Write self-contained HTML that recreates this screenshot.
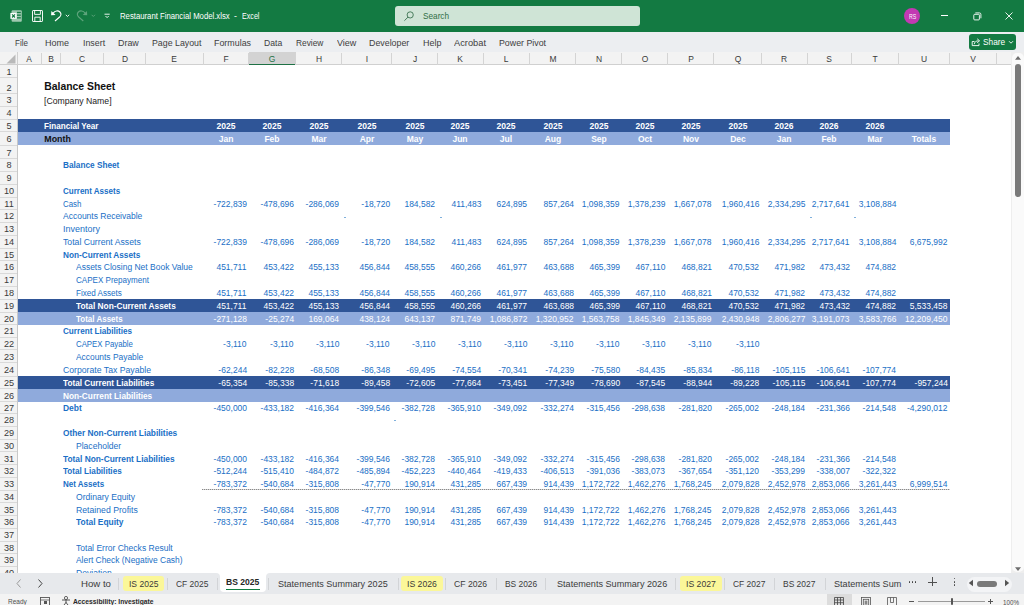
<!DOCTYPE html>
<html><head><meta charset="utf-8"><title>Restaurant Financial Model.xlsx - Excel</title>
<style>
html,body{margin:0;padding:0;}
body{width:1024px;height:605px;overflow:hidden;position:relative;background:#fff;font-family:"Liberation Sans", sans-serif;}
.t{position:absolute;white-space:nowrap;font-family:"Liberation Sans", sans-serif;}
</style></head><body>
<div style="position:absolute;left:17.00px;top:119.00px;width:932.75px;height:12.80px;background:#2f5597;"></div>
<div style="position:absolute;left:17.00px;top:131.80px;width:932.75px;height:13.50px;background:#8faadc;"></div>
<div style="position:absolute;left:17.00px;top:299.36px;width:932.75px;height:12.74px;background:#2f5597;"></div>
<div style="position:absolute;left:17.00px;top:312.10px;width:932.75px;height:12.74px;background:#8faadc;"></div>
<div style="position:absolute;left:17.00px;top:375.96px;width:932.75px;height:12.74px;background:#2f5597;"></div>
<div style="position:absolute;left:17.00px;top:388.70px;width:932.75px;height:13.14px;background:#8faadc;"></div>
<div style="position:absolute;left:202px;top:489px;width:748px;height:1px;background:repeating-linear-gradient(90deg,#8a8a8a 0 1px,#d4d4d4 1px 2px);"></div>
<div class="t" style="left:44.30px;top:81px;font-size:10.4px;line-height:11.62px;color:#111;font-weight:bold;">Balance Sheet</div>
<div class="t" style="left:44.30px;top:96px;font-size:9.0px;line-height:10.05px;color:#222;transform:scaleX(0.965);transform-origin:left 0;">[Company Name]</div>
<div class="t" style="left:44.30px;top:122px;font-size:8.8px;line-height:9.83px;color:#fff;font-weight:bold;transform:scaleX(0.922);transform-origin:left 0;">Financial Year</div>
<div class="t" style="left:44.30px;top:135px;font-size:8.9px;line-height:9.94px;color:#111;font-weight:bold;transform:scaleX(1.000);transform-origin:left 0;">Month</div>
<div class="t" style="left:26.00px;width:400px;text-align:center;top:122px;font-size:8.8px;line-height:9.83px;color:#fff;font-weight:bold;transform:scaleX(0.970);transform-origin:center 0;">2025</div>
<div class="t" style="left:26.00px;width:400px;text-align:center;top:135px;font-size:8.8px;line-height:9.83px;color:#fff;font-weight:bold;transform:scaleX(0.970);transform-origin:center 0;">Jan</div>
<div class="t" style="left:72.25px;width:400px;text-align:center;top:122px;font-size:8.8px;line-height:9.83px;color:#fff;font-weight:bold;transform:scaleX(0.970);transform-origin:center 0;">2025</div>
<div class="t" style="left:72.25px;width:400px;text-align:center;top:135px;font-size:8.8px;line-height:9.83px;color:#fff;font-weight:bold;transform:scaleX(0.970);transform-origin:center 0;">Feb</div>
<div class="t" style="left:118.50px;width:400px;text-align:center;top:122px;font-size:8.8px;line-height:9.83px;color:#fff;font-weight:bold;transform:scaleX(0.970);transform-origin:center 0;">2025</div>
<div class="t" style="left:118.50px;width:400px;text-align:center;top:135px;font-size:8.8px;line-height:9.83px;color:#fff;font-weight:bold;transform:scaleX(0.970);transform-origin:center 0;">Mar</div>
<div class="t" style="left:166.50px;width:400px;text-align:center;top:122px;font-size:8.8px;line-height:9.83px;color:#fff;font-weight:bold;transform:scaleX(0.970);transform-origin:center 0;">2025</div>
<div class="t" style="left:166.50px;width:400px;text-align:center;top:135px;font-size:8.8px;line-height:9.83px;color:#fff;font-weight:bold;transform:scaleX(0.970);transform-origin:center 0;">Apr</div>
<div class="t" style="left:214.62px;width:400px;text-align:center;top:122px;font-size:8.8px;line-height:9.83px;color:#fff;font-weight:bold;transform:scaleX(0.970);transform-origin:center 0;">2025</div>
<div class="t" style="left:214.62px;width:400px;text-align:center;top:135px;font-size:8.8px;line-height:9.83px;color:#fff;font-weight:bold;transform:scaleX(0.970);transform-origin:center 0;">May</div>
<div class="t" style="left:260.38px;width:400px;text-align:center;top:122px;font-size:8.8px;line-height:9.83px;color:#fff;font-weight:bold;transform:scaleX(0.970);transform-origin:center 0;">2025</div>
<div class="t" style="left:260.38px;width:400px;text-align:center;top:135px;font-size:8.8px;line-height:9.83px;color:#fff;font-weight:bold;transform:scaleX(0.970);transform-origin:center 0;">Jun</div>
<div class="t" style="left:306.38px;width:400px;text-align:center;top:122px;font-size:8.8px;line-height:9.83px;color:#fff;font-weight:bold;transform:scaleX(0.970);transform-origin:center 0;">2025</div>
<div class="t" style="left:306.38px;width:400px;text-align:center;top:135px;font-size:8.8px;line-height:9.83px;color:#fff;font-weight:bold;transform:scaleX(0.970);transform-origin:center 0;">Jul</div>
<div class="t" style="left:352.62px;width:400px;text-align:center;top:122px;font-size:8.8px;line-height:9.83px;color:#fff;font-weight:bold;transform:scaleX(0.970);transform-origin:center 0;">2025</div>
<div class="t" style="left:352.62px;width:400px;text-align:center;top:135px;font-size:8.8px;line-height:9.83px;color:#fff;font-weight:bold;transform:scaleX(0.970);transform-origin:center 0;">Aug</div>
<div class="t" style="left:398.75px;width:400px;text-align:center;top:122px;font-size:8.8px;line-height:9.83px;color:#fff;font-weight:bold;transform:scaleX(0.970);transform-origin:center 0;">2025</div>
<div class="t" style="left:398.75px;width:400px;text-align:center;top:135px;font-size:8.8px;line-height:9.83px;color:#fff;font-weight:bold;transform:scaleX(0.970);transform-origin:center 0;">Sep</div>
<div class="t" style="left:444.62px;width:400px;text-align:center;top:122px;font-size:8.8px;line-height:9.83px;color:#fff;font-weight:bold;transform:scaleX(0.970);transform-origin:center 0;">2025</div>
<div class="t" style="left:444.62px;width:400px;text-align:center;top:135px;font-size:8.8px;line-height:9.83px;color:#fff;font-weight:bold;transform:scaleX(0.970);transform-origin:center 0;">Oct</div>
<div class="t" style="left:490.62px;width:400px;text-align:center;top:122px;font-size:8.8px;line-height:9.83px;color:#fff;font-weight:bold;transform:scaleX(0.970);transform-origin:center 0;">2025</div>
<div class="t" style="left:490.62px;width:400px;text-align:center;top:135px;font-size:8.8px;line-height:9.83px;color:#fff;font-weight:bold;transform:scaleX(0.970);transform-origin:center 0;">Nov</div>
<div class="t" style="left:537.50px;width:400px;text-align:center;top:122px;font-size:8.8px;line-height:9.83px;color:#fff;font-weight:bold;transform:scaleX(0.970);transform-origin:center 0;">2025</div>
<div class="t" style="left:537.50px;width:400px;text-align:center;top:135px;font-size:8.8px;line-height:9.83px;color:#fff;font-weight:bold;transform:scaleX(0.970);transform-origin:center 0;">Dec</div>
<div class="t" style="left:584.12px;width:400px;text-align:center;top:122px;font-size:8.8px;line-height:9.83px;color:#fff;font-weight:bold;transform:scaleX(0.970);transform-origin:center 0;">2026</div>
<div class="t" style="left:584.12px;width:400px;text-align:center;top:135px;font-size:8.8px;line-height:9.83px;color:#fff;font-weight:bold;transform:scaleX(0.970);transform-origin:center 0;">Jan</div>
<div class="t" style="left:629.38px;width:400px;text-align:center;top:122px;font-size:8.8px;line-height:9.83px;color:#fff;font-weight:bold;transform:scaleX(0.970);transform-origin:center 0;">2026</div>
<div class="t" style="left:629.38px;width:400px;text-align:center;top:135px;font-size:8.8px;line-height:9.83px;color:#fff;font-weight:bold;transform:scaleX(0.970);transform-origin:center 0;">Feb</div>
<div class="t" style="left:675.12px;width:400px;text-align:center;top:122px;font-size:8.8px;line-height:9.83px;color:#fff;font-weight:bold;transform:scaleX(0.970);transform-origin:center 0;">2026</div>
<div class="t" style="left:675.12px;width:400px;text-align:center;top:135px;font-size:8.8px;line-height:9.83px;color:#fff;font-weight:bold;transform:scaleX(0.970);transform-origin:center 0;">Mar</div>
<div class="t" style="left:724.12px;width:400px;text-align:center;top:135px;font-size:8.8px;line-height:9.83px;color:#fff;font-weight:bold;transform:scaleX(0.970);transform-origin:center 0;">Totals</div>
<div class="t" style="left:62.70px;top:161px;font-size:8.8px;line-height:9.83px;color:#1a6fc6;font-weight:bold;transform:scaleX(0.937);transform-origin:left 0;">Balance Sheet</div>
<div class="t" style="left:62.70px;top:187px;font-size:8.8px;line-height:9.83px;color:#1a6fc6;font-weight:bold;transform:scaleX(0.910);transform-origin:left 0;">Current Assets</div>
<div class="t" style="left:62.70px;top:200px;font-size:8.9px;line-height:9.94px;color:#1a6fc6;transform:scaleX(0.886);transform-origin:left 0;">Cash</div>
<div class="t" style="left:62.70px;top:212px;font-size:8.9px;line-height:9.94px;color:#1a6fc6;transform:scaleX(0.957);transform-origin:left 0;">Accounts Receivable</div>
<div class="t" style="left:62.70px;top:225px;font-size:8.9px;line-height:9.94px;color:#1a6fc6;transform:scaleX(1.011);transform-origin:left 0;">Inventory</div>
<div class="t" style="left:62.70px;top:238px;font-size:8.9px;line-height:9.94px;color:#1a6fc6;transform:scaleX(0.979);transform-origin:left 0;">Total Current Assets</div>
<div class="t" style="left:62.70px;top:251px;font-size:8.8px;line-height:9.83px;color:#1a6fc6;font-weight:bold;transform:scaleX(0.934);transform-origin:left 0;">Non-Current Assets</div>
<div class="t" style="left:75.60px;top:263px;font-size:8.9px;line-height:9.94px;color:#1a6fc6;transform:scaleX(0.956);transform-origin:left 0;">Assets Closing Net Book Value</div>
<div class="t" style="left:75.60px;top:276px;font-size:8.9px;line-height:9.94px;color:#1a6fc6;transform:scaleX(0.907);transform-origin:left 0;">CAPEX Prepayment</div>
<div class="t" style="left:75.60px;top:289px;font-size:8.9px;line-height:9.94px;color:#1a6fc6;transform:scaleX(0.912);transform-origin:left 0;">Fixed Assets</div>
<div class="t" style="left:75.60px;top:302px;font-size:8.8px;line-height:9.83px;color:#fff;font-weight:bold;transform:scaleX(0.945);transform-origin:left 0;">Total Non-Current Assets</div>
<div class="t" style="left:75.60px;top:315px;font-size:8.8px;line-height:9.83px;color:#fff;font-weight:bold;transform:scaleX(0.909);transform-origin:left 0;">Total Assets</div>
<div class="t" style="left:62.70px;top:327px;font-size:8.8px;line-height:9.83px;color:#1a6fc6;font-weight:bold;transform:scaleX(0.924);transform-origin:left 0;">Current Liabilities</div>
<div class="t" style="left:75.60px;top:340px;font-size:8.9px;line-height:9.94px;color:#1a6fc6;transform:scaleX(0.881);transform-origin:left 0;">CAPEX Payable</div>
<div class="t" style="left:75.60px;top:353px;font-size:8.9px;line-height:9.94px;color:#1a6fc6;transform:scaleX(0.947);transform-origin:left 0;">Accounts Payable</div>
<div class="t" style="left:62.70px;top:366px;font-size:8.9px;line-height:9.94px;color:#1a6fc6;transform:scaleX(0.977);transform-origin:left 0;">Corporate Tax Payable</div>
<div class="t" style="left:62.70px;top:379px;font-size:8.8px;line-height:9.83px;color:#fff;font-weight:bold;transform:scaleX(0.935);transform-origin:left 0;">Total Current Liabilities</div>
<div class="t" style="left:62.70px;top:392px;font-size:8.8px;line-height:9.83px;color:#fff;font-weight:bold;transform:scaleX(0.941);transform-origin:left 0;">Non-Current Liabilities</div>
<div class="t" style="left:62.70px;top:404px;font-size:8.8px;line-height:9.83px;color:#1a6fc6;font-weight:bold;transform:scaleX(0.961);transform-origin:left 0;">Debt</div>
<div class="t" style="left:62.70px;top:429px;font-size:8.8px;line-height:9.83px;color:#1a6fc6;font-weight:bold;transform:scaleX(0.946);transform-origin:left 0;">Other Non-Current Liabilities</div>
<div class="t" style="left:75.60px;top:442px;font-size:8.9px;line-height:9.94px;color:#1a6fc6;transform:scaleX(0.964);transform-origin:left 0;">Placeholder</div>
<div class="t" style="left:62.70px;top:455px;font-size:8.8px;line-height:9.83px;color:#1a6fc6;font-weight:bold;transform:scaleX(0.949);transform-origin:left 0;">Total Non-Current Liabilities</div>
<div class="t" style="left:62.70px;top:467px;font-size:8.8px;line-height:9.83px;color:#1a6fc6;font-weight:bold;transform:scaleX(0.926);transform-origin:left 0;">Total Liabilities</div>
<div class="t" style="left:62.70px;top:480px;font-size:8.8px;line-height:9.83px;color:#1a6fc6;font-weight:bold;transform:scaleX(0.910);transform-origin:left 0;">Net Assets</div>
<div class="t" style="left:75.60px;top:493px;font-size:8.9px;line-height:9.94px;color:#1a6fc6;transform:scaleX(0.965);transform-origin:left 0;">Ordinary Equity</div>
<div class="t" style="left:75.60px;top:506px;font-size:8.9px;line-height:9.94px;color:#1a6fc6;transform:scaleX(0.978);transform-origin:left 0;">Retained Profits</div>
<div class="t" style="left:75.60px;top:518px;font-size:8.8px;line-height:9.83px;color:#1a6fc6;font-weight:bold;transform:scaleX(0.956);transform-origin:left 0;">Total Equity</div>
<div class="t" style="left:75.60px;top:544px;font-size:8.9px;line-height:9.94px;color:#1a6fc6;transform:scaleX(0.961);transform-origin:left 0;">Total Error Checks Result</div>
<div class="t" style="left:75.60px;top:556px;font-size:8.9px;line-height:9.94px;color:#1a6fc6;transform:scaleX(0.947);transform-origin:left 0;">Alert Check (Negative Cash)</div>
<div class="t" style="left:75.60px;top:569px;font-size:8.9px;line-height:9.94px;color:#1a6fc6;transform:scaleX(0.965);transform-origin:left 0;">Deviation</div>
<div class="t" style="right:777.25px;top:200px;font-size:8.9px;line-height:9.94px;color:#1a6fc6;transform:scaleX(0.955);transform-origin:right 0;">-722,839</div>
<div class="t" style="right:730.25px;top:200px;font-size:8.9px;line-height:9.94px;color:#1a6fc6;transform:scaleX(0.955);transform-origin:right 0;">-478,696</div>
<div class="t" style="right:684.75px;top:200px;font-size:8.9px;line-height:9.94px;color:#1a6fc6;transform:scaleX(0.955);transform-origin:right 0;">-286,069</div>
<div class="t" style="right:634.25px;top:200px;font-size:8.9px;line-height:9.94px;color:#1a6fc6;transform:scaleX(0.955);transform-origin:right 0;">-18,720</div>
<div class="t" style="right:588.50px;top:200px;font-size:8.9px;line-height:9.94px;color:#1a6fc6;transform:scaleX(0.955);transform-origin:right 0;">184,582</div>
<div class="t" style="right:542.75px;top:200px;font-size:8.9px;line-height:9.94px;color:#1a6fc6;transform:scaleX(0.955);transform-origin:right 0;">411,483</div>
<div class="t" style="right:496.50px;top:200px;font-size:8.9px;line-height:9.94px;color:#1a6fc6;transform:scaleX(0.955);transform-origin:right 0;">624,895</div>
<div class="t" style="right:450.25px;top:200px;font-size:8.9px;line-height:9.94px;color:#1a6fc6;transform:scaleX(0.955);transform-origin:right 0;">857,264</div>
<div class="t" style="right:404.25px;top:200px;font-size:8.9px;line-height:9.94px;color:#1a6fc6;transform:scaleX(0.955);transform-origin:right 0;">1,098,359</div>
<div class="t" style="right:358.50px;top:200px;font-size:8.9px;line-height:9.94px;color:#1a6fc6;transform:scaleX(0.955);transform-origin:right 0;">1,378,239</div>
<div class="t" style="right:312.25px;top:200px;font-size:8.9px;line-height:9.94px;color:#1a6fc6;transform:scaleX(0.955);transform-origin:right 0;">1,667,078</div>
<div class="t" style="right:264.75px;top:200px;font-size:8.9px;line-height:9.94px;color:#1a6fc6;transform:scaleX(0.955);transform-origin:right 0;">1,960,416</div>
<div class="t" style="right:219.00px;top:200px;font-size:8.9px;line-height:9.94px;color:#1a6fc6;transform:scaleX(0.955);transform-origin:right 0;">2,334,295</div>
<div class="t" style="right:174.25px;top:200px;font-size:8.9px;line-height:9.94px;color:#1a6fc6;transform:scaleX(0.955);transform-origin:right 0;">2,717,641</div>
<div class="t" style="right:127.50px;top:200px;font-size:8.9px;line-height:9.94px;color:#1a6fc6;transform:scaleX(0.955);transform-origin:right 0;">3,108,884</div>
<div class="t" style="right:777.25px;top:238px;font-size:8.9px;line-height:9.94px;color:#1a6fc6;transform:scaleX(0.955);transform-origin:right 0;">-722,839</div>
<div class="t" style="right:730.25px;top:238px;font-size:8.9px;line-height:9.94px;color:#1a6fc6;transform:scaleX(0.955);transform-origin:right 0;">-478,696</div>
<div class="t" style="right:684.75px;top:238px;font-size:8.9px;line-height:9.94px;color:#1a6fc6;transform:scaleX(0.955);transform-origin:right 0;">-286,069</div>
<div class="t" style="right:634.25px;top:238px;font-size:8.9px;line-height:9.94px;color:#1a6fc6;transform:scaleX(0.955);transform-origin:right 0;">-18,720</div>
<div class="t" style="right:588.50px;top:238px;font-size:8.9px;line-height:9.94px;color:#1a6fc6;transform:scaleX(0.955);transform-origin:right 0;">184,582</div>
<div class="t" style="right:542.75px;top:238px;font-size:8.9px;line-height:9.94px;color:#1a6fc6;transform:scaleX(0.955);transform-origin:right 0;">411,483</div>
<div class="t" style="right:496.50px;top:238px;font-size:8.9px;line-height:9.94px;color:#1a6fc6;transform:scaleX(0.955);transform-origin:right 0;">624,895</div>
<div class="t" style="right:450.25px;top:238px;font-size:8.9px;line-height:9.94px;color:#1a6fc6;transform:scaleX(0.955);transform-origin:right 0;">857,264</div>
<div class="t" style="right:404.25px;top:238px;font-size:8.9px;line-height:9.94px;color:#1a6fc6;transform:scaleX(0.955);transform-origin:right 0;">1,098,359</div>
<div class="t" style="right:358.50px;top:238px;font-size:8.9px;line-height:9.94px;color:#1a6fc6;transform:scaleX(0.955);transform-origin:right 0;">1,378,239</div>
<div class="t" style="right:312.25px;top:238px;font-size:8.9px;line-height:9.94px;color:#1a6fc6;transform:scaleX(0.955);transform-origin:right 0;">1,667,078</div>
<div class="t" style="right:264.75px;top:238px;font-size:8.9px;line-height:9.94px;color:#1a6fc6;transform:scaleX(0.955);transform-origin:right 0;">1,960,416</div>
<div class="t" style="right:219.00px;top:238px;font-size:8.9px;line-height:9.94px;color:#1a6fc6;transform:scaleX(0.955);transform-origin:right 0;">2,334,295</div>
<div class="t" style="right:174.25px;top:238px;font-size:8.9px;line-height:9.94px;color:#1a6fc6;transform:scaleX(0.955);transform-origin:right 0;">2,717,641</div>
<div class="t" style="right:127.50px;top:238px;font-size:8.9px;line-height:9.94px;color:#1a6fc6;transform:scaleX(0.955);transform-origin:right 0;">3,108,884</div>
<div class="t" style="right:76.25px;top:238px;font-size:8.9px;line-height:9.94px;color:#1a6fc6;transform:scaleX(0.955);transform-origin:right 0;">6,675,992</div>
<div class="t" style="right:777.25px;top:263px;font-size:8.9px;line-height:9.94px;color:#1a6fc6;transform:scaleX(0.955);transform-origin:right 0;">451,711</div>
<div class="t" style="right:730.25px;top:263px;font-size:8.9px;line-height:9.94px;color:#1a6fc6;transform:scaleX(0.955);transform-origin:right 0;">453,422</div>
<div class="t" style="right:684.75px;top:263px;font-size:8.9px;line-height:9.94px;color:#1a6fc6;transform:scaleX(0.955);transform-origin:right 0;">455,133</div>
<div class="t" style="right:634.25px;top:263px;font-size:8.9px;line-height:9.94px;color:#1a6fc6;transform:scaleX(0.955);transform-origin:right 0;">456,844</div>
<div class="t" style="right:588.50px;top:263px;font-size:8.9px;line-height:9.94px;color:#1a6fc6;transform:scaleX(0.955);transform-origin:right 0;">458,555</div>
<div class="t" style="right:542.75px;top:263px;font-size:8.9px;line-height:9.94px;color:#1a6fc6;transform:scaleX(0.955);transform-origin:right 0;">460,266</div>
<div class="t" style="right:496.50px;top:263px;font-size:8.9px;line-height:9.94px;color:#1a6fc6;transform:scaleX(0.955);transform-origin:right 0;">461,977</div>
<div class="t" style="right:450.25px;top:263px;font-size:8.9px;line-height:9.94px;color:#1a6fc6;transform:scaleX(0.955);transform-origin:right 0;">463,688</div>
<div class="t" style="right:404.25px;top:263px;font-size:8.9px;line-height:9.94px;color:#1a6fc6;transform:scaleX(0.955);transform-origin:right 0;">465,399</div>
<div class="t" style="right:358.50px;top:263px;font-size:8.9px;line-height:9.94px;color:#1a6fc6;transform:scaleX(0.955);transform-origin:right 0;">467,110</div>
<div class="t" style="right:312.25px;top:263px;font-size:8.9px;line-height:9.94px;color:#1a6fc6;transform:scaleX(0.955);transform-origin:right 0;">468,821</div>
<div class="t" style="right:264.75px;top:263px;font-size:8.9px;line-height:9.94px;color:#1a6fc6;transform:scaleX(0.955);transform-origin:right 0;">470,532</div>
<div class="t" style="right:219.00px;top:263px;font-size:8.9px;line-height:9.94px;color:#1a6fc6;transform:scaleX(0.955);transform-origin:right 0;">471,982</div>
<div class="t" style="right:174.25px;top:263px;font-size:8.9px;line-height:9.94px;color:#1a6fc6;transform:scaleX(0.955);transform-origin:right 0;">473,432</div>
<div class="t" style="right:127.50px;top:263px;font-size:8.9px;line-height:9.94px;color:#1a6fc6;transform:scaleX(0.955);transform-origin:right 0;">474,882</div>
<div class="t" style="right:777.25px;top:289px;font-size:8.9px;line-height:9.94px;color:#1a6fc6;transform:scaleX(0.955);transform-origin:right 0;">451,711</div>
<div class="t" style="right:730.25px;top:289px;font-size:8.9px;line-height:9.94px;color:#1a6fc6;transform:scaleX(0.955);transform-origin:right 0;">453,422</div>
<div class="t" style="right:684.75px;top:289px;font-size:8.9px;line-height:9.94px;color:#1a6fc6;transform:scaleX(0.955);transform-origin:right 0;">455,133</div>
<div class="t" style="right:634.25px;top:289px;font-size:8.9px;line-height:9.94px;color:#1a6fc6;transform:scaleX(0.955);transform-origin:right 0;">456,844</div>
<div class="t" style="right:588.50px;top:289px;font-size:8.9px;line-height:9.94px;color:#1a6fc6;transform:scaleX(0.955);transform-origin:right 0;">458,555</div>
<div class="t" style="right:542.75px;top:289px;font-size:8.9px;line-height:9.94px;color:#1a6fc6;transform:scaleX(0.955);transform-origin:right 0;">460,266</div>
<div class="t" style="right:496.50px;top:289px;font-size:8.9px;line-height:9.94px;color:#1a6fc6;transform:scaleX(0.955);transform-origin:right 0;">461,977</div>
<div class="t" style="right:450.25px;top:289px;font-size:8.9px;line-height:9.94px;color:#1a6fc6;transform:scaleX(0.955);transform-origin:right 0;">463,688</div>
<div class="t" style="right:404.25px;top:289px;font-size:8.9px;line-height:9.94px;color:#1a6fc6;transform:scaleX(0.955);transform-origin:right 0;">465,399</div>
<div class="t" style="right:358.50px;top:289px;font-size:8.9px;line-height:9.94px;color:#1a6fc6;transform:scaleX(0.955);transform-origin:right 0;">467,110</div>
<div class="t" style="right:312.25px;top:289px;font-size:8.9px;line-height:9.94px;color:#1a6fc6;transform:scaleX(0.955);transform-origin:right 0;">468,821</div>
<div class="t" style="right:264.75px;top:289px;font-size:8.9px;line-height:9.94px;color:#1a6fc6;transform:scaleX(0.955);transform-origin:right 0;">470,532</div>
<div class="t" style="right:219.00px;top:289px;font-size:8.9px;line-height:9.94px;color:#1a6fc6;transform:scaleX(0.955);transform-origin:right 0;">471,982</div>
<div class="t" style="right:174.25px;top:289px;font-size:8.9px;line-height:9.94px;color:#1a6fc6;transform:scaleX(0.955);transform-origin:right 0;">473,432</div>
<div class="t" style="right:127.50px;top:289px;font-size:8.9px;line-height:9.94px;color:#1a6fc6;transform:scaleX(0.955);transform-origin:right 0;">474,882</div>
<div class="t" style="right:777.25px;top:302px;font-size:8.9px;line-height:9.94px;color:#fff;transform:scaleX(0.955);transform-origin:right 0;">451,711</div>
<div class="t" style="right:730.25px;top:302px;font-size:8.9px;line-height:9.94px;color:#fff;transform:scaleX(0.955);transform-origin:right 0;">453,422</div>
<div class="t" style="right:684.75px;top:302px;font-size:8.9px;line-height:9.94px;color:#fff;transform:scaleX(0.955);transform-origin:right 0;">455,133</div>
<div class="t" style="right:634.25px;top:302px;font-size:8.9px;line-height:9.94px;color:#fff;transform:scaleX(0.955);transform-origin:right 0;">456,844</div>
<div class="t" style="right:588.50px;top:302px;font-size:8.9px;line-height:9.94px;color:#fff;transform:scaleX(0.955);transform-origin:right 0;">458,555</div>
<div class="t" style="right:542.75px;top:302px;font-size:8.9px;line-height:9.94px;color:#fff;transform:scaleX(0.955);transform-origin:right 0;">460,266</div>
<div class="t" style="right:496.50px;top:302px;font-size:8.9px;line-height:9.94px;color:#fff;transform:scaleX(0.955);transform-origin:right 0;">461,977</div>
<div class="t" style="right:450.25px;top:302px;font-size:8.9px;line-height:9.94px;color:#fff;transform:scaleX(0.955);transform-origin:right 0;">463,688</div>
<div class="t" style="right:404.25px;top:302px;font-size:8.9px;line-height:9.94px;color:#fff;transform:scaleX(0.955);transform-origin:right 0;">465,399</div>
<div class="t" style="right:358.50px;top:302px;font-size:8.9px;line-height:9.94px;color:#fff;transform:scaleX(0.955);transform-origin:right 0;">467,110</div>
<div class="t" style="right:312.25px;top:302px;font-size:8.9px;line-height:9.94px;color:#fff;transform:scaleX(0.955);transform-origin:right 0;">468,821</div>
<div class="t" style="right:264.75px;top:302px;font-size:8.9px;line-height:9.94px;color:#fff;transform:scaleX(0.955);transform-origin:right 0;">470,532</div>
<div class="t" style="right:219.00px;top:302px;font-size:8.9px;line-height:9.94px;color:#fff;transform:scaleX(0.955);transform-origin:right 0;">471,982</div>
<div class="t" style="right:174.25px;top:302px;font-size:8.9px;line-height:9.94px;color:#fff;transform:scaleX(0.955);transform-origin:right 0;">473,432</div>
<div class="t" style="right:127.50px;top:302px;font-size:8.9px;line-height:9.94px;color:#fff;transform:scaleX(0.955);transform-origin:right 0;">474,882</div>
<div class="t" style="right:76.25px;top:302px;font-size:8.9px;line-height:9.94px;color:#fff;transform:scaleX(0.955);transform-origin:right 0;">5,533,458</div>
<div class="t" style="right:777.25px;top:315px;font-size:8.9px;line-height:9.94px;color:#fff;transform:scaleX(0.955);transform-origin:right 0;">-271,128</div>
<div class="t" style="right:730.25px;top:315px;font-size:8.9px;line-height:9.94px;color:#fff;transform:scaleX(0.955);transform-origin:right 0;">-25,274</div>
<div class="t" style="right:684.75px;top:315px;font-size:8.9px;line-height:9.94px;color:#fff;transform:scaleX(0.955);transform-origin:right 0;">169,064</div>
<div class="t" style="right:634.25px;top:315px;font-size:8.9px;line-height:9.94px;color:#fff;transform:scaleX(0.955);transform-origin:right 0;">438,124</div>
<div class="t" style="right:588.50px;top:315px;font-size:8.9px;line-height:9.94px;color:#fff;transform:scaleX(0.955);transform-origin:right 0;">643,137</div>
<div class="t" style="right:542.75px;top:315px;font-size:8.9px;line-height:9.94px;color:#fff;transform:scaleX(0.955);transform-origin:right 0;">871,749</div>
<div class="t" style="right:496.50px;top:315px;font-size:8.9px;line-height:9.94px;color:#fff;transform:scaleX(0.955);transform-origin:right 0;">1,086,872</div>
<div class="t" style="right:450.25px;top:315px;font-size:8.9px;line-height:9.94px;color:#fff;transform:scaleX(0.955);transform-origin:right 0;">1,320,952</div>
<div class="t" style="right:404.25px;top:315px;font-size:8.9px;line-height:9.94px;color:#fff;transform:scaleX(0.955);transform-origin:right 0;">1,563,758</div>
<div class="t" style="right:358.50px;top:315px;font-size:8.9px;line-height:9.94px;color:#fff;transform:scaleX(0.955);transform-origin:right 0;">1,845,349</div>
<div class="t" style="right:312.25px;top:315px;font-size:8.9px;line-height:9.94px;color:#fff;transform:scaleX(0.955);transform-origin:right 0;">2,135,899</div>
<div class="t" style="right:264.75px;top:315px;font-size:8.9px;line-height:9.94px;color:#fff;transform:scaleX(0.955);transform-origin:right 0;">2,430,948</div>
<div class="t" style="right:219.00px;top:315px;font-size:8.9px;line-height:9.94px;color:#fff;transform:scaleX(0.955);transform-origin:right 0;">2,806,277</div>
<div class="t" style="right:174.25px;top:315px;font-size:8.9px;line-height:9.94px;color:#fff;transform:scaleX(0.955);transform-origin:right 0;">3,191,073</div>
<div class="t" style="right:127.50px;top:315px;font-size:8.9px;line-height:9.94px;color:#fff;transform:scaleX(0.955);transform-origin:right 0;">3,583,766</div>
<div class="t" style="right:76.25px;top:315px;font-size:8.9px;line-height:9.94px;color:#fff;transform:scaleX(0.955);transform-origin:right 0;">12,209,450</div>
<div class="t" style="right:777.25px;top:340px;font-size:8.9px;line-height:9.94px;color:#1a6fc6;transform:scaleX(0.955);transform-origin:right 0;">-3,110</div>
<div class="t" style="right:730.25px;top:340px;font-size:8.9px;line-height:9.94px;color:#1a6fc6;transform:scaleX(0.955);transform-origin:right 0;">-3,110</div>
<div class="t" style="right:684.75px;top:340px;font-size:8.9px;line-height:9.94px;color:#1a6fc6;transform:scaleX(0.955);transform-origin:right 0;">-3,110</div>
<div class="t" style="right:634.25px;top:340px;font-size:8.9px;line-height:9.94px;color:#1a6fc6;transform:scaleX(0.955);transform-origin:right 0;">-3,110</div>
<div class="t" style="right:588.50px;top:340px;font-size:8.9px;line-height:9.94px;color:#1a6fc6;transform:scaleX(0.955);transform-origin:right 0;">-3,110</div>
<div class="t" style="right:542.75px;top:340px;font-size:8.9px;line-height:9.94px;color:#1a6fc6;transform:scaleX(0.955);transform-origin:right 0;">-3,110</div>
<div class="t" style="right:496.50px;top:340px;font-size:8.9px;line-height:9.94px;color:#1a6fc6;transform:scaleX(0.955);transform-origin:right 0;">-3,110</div>
<div class="t" style="right:450.25px;top:340px;font-size:8.9px;line-height:9.94px;color:#1a6fc6;transform:scaleX(0.955);transform-origin:right 0;">-3,110</div>
<div class="t" style="right:404.25px;top:340px;font-size:8.9px;line-height:9.94px;color:#1a6fc6;transform:scaleX(0.955);transform-origin:right 0;">-3,110</div>
<div class="t" style="right:358.50px;top:340px;font-size:8.9px;line-height:9.94px;color:#1a6fc6;transform:scaleX(0.955);transform-origin:right 0;">-3,110</div>
<div class="t" style="right:312.25px;top:340px;font-size:8.9px;line-height:9.94px;color:#1a6fc6;transform:scaleX(0.955);transform-origin:right 0;">-3,110</div>
<div class="t" style="right:264.75px;top:340px;font-size:8.9px;line-height:9.94px;color:#1a6fc6;transform:scaleX(0.955);transform-origin:right 0;">-3,110</div>
<div class="t" style="right:777.25px;top:366px;font-size:8.9px;line-height:9.94px;color:#1a6fc6;transform:scaleX(0.955);transform-origin:right 0;">-62,244</div>
<div class="t" style="right:730.25px;top:366px;font-size:8.9px;line-height:9.94px;color:#1a6fc6;transform:scaleX(0.955);transform-origin:right 0;">-82,228</div>
<div class="t" style="right:684.75px;top:366px;font-size:8.9px;line-height:9.94px;color:#1a6fc6;transform:scaleX(0.955);transform-origin:right 0;">-68,508</div>
<div class="t" style="right:634.25px;top:366px;font-size:8.9px;line-height:9.94px;color:#1a6fc6;transform:scaleX(0.955);transform-origin:right 0;">-86,348</div>
<div class="t" style="right:588.50px;top:366px;font-size:8.9px;line-height:9.94px;color:#1a6fc6;transform:scaleX(0.955);transform-origin:right 0;">-69,495</div>
<div class="t" style="right:542.75px;top:366px;font-size:8.9px;line-height:9.94px;color:#1a6fc6;transform:scaleX(0.955);transform-origin:right 0;">-74,554</div>
<div class="t" style="right:496.50px;top:366px;font-size:8.9px;line-height:9.94px;color:#1a6fc6;transform:scaleX(0.955);transform-origin:right 0;">-70,341</div>
<div class="t" style="right:450.25px;top:366px;font-size:8.9px;line-height:9.94px;color:#1a6fc6;transform:scaleX(0.955);transform-origin:right 0;">-74,239</div>
<div class="t" style="right:404.25px;top:366px;font-size:8.9px;line-height:9.94px;color:#1a6fc6;transform:scaleX(0.955);transform-origin:right 0;">-75,580</div>
<div class="t" style="right:358.50px;top:366px;font-size:8.9px;line-height:9.94px;color:#1a6fc6;transform:scaleX(0.955);transform-origin:right 0;">-84,435</div>
<div class="t" style="right:312.25px;top:366px;font-size:8.9px;line-height:9.94px;color:#1a6fc6;transform:scaleX(0.955);transform-origin:right 0;">-85,834</div>
<div class="t" style="right:264.75px;top:366px;font-size:8.9px;line-height:9.94px;color:#1a6fc6;transform:scaleX(0.955);transform-origin:right 0;">-86,118</div>
<div class="t" style="right:219.00px;top:366px;font-size:8.9px;line-height:9.94px;color:#1a6fc6;transform:scaleX(0.955);transform-origin:right 0;">-105,115</div>
<div class="t" style="right:174.25px;top:366px;font-size:8.9px;line-height:9.94px;color:#1a6fc6;transform:scaleX(0.955);transform-origin:right 0;">-106,641</div>
<div class="t" style="right:127.50px;top:366px;font-size:8.9px;line-height:9.94px;color:#1a6fc6;transform:scaleX(0.955);transform-origin:right 0;">-107,774</div>
<div class="t" style="right:777.25px;top:379px;font-size:8.9px;line-height:9.94px;color:#fff;transform:scaleX(0.955);transform-origin:right 0;">-65,354</div>
<div class="t" style="right:730.25px;top:379px;font-size:8.9px;line-height:9.94px;color:#fff;transform:scaleX(0.955);transform-origin:right 0;">-85,338</div>
<div class="t" style="right:684.75px;top:379px;font-size:8.9px;line-height:9.94px;color:#fff;transform:scaleX(0.955);transform-origin:right 0;">-71,618</div>
<div class="t" style="right:634.25px;top:379px;font-size:8.9px;line-height:9.94px;color:#fff;transform:scaleX(0.955);transform-origin:right 0;">-89,458</div>
<div class="t" style="right:588.50px;top:379px;font-size:8.9px;line-height:9.94px;color:#fff;transform:scaleX(0.955);transform-origin:right 0;">-72,605</div>
<div class="t" style="right:542.75px;top:379px;font-size:8.9px;line-height:9.94px;color:#fff;transform:scaleX(0.955);transform-origin:right 0;">-77,664</div>
<div class="t" style="right:496.50px;top:379px;font-size:8.9px;line-height:9.94px;color:#fff;transform:scaleX(0.955);transform-origin:right 0;">-73,451</div>
<div class="t" style="right:450.25px;top:379px;font-size:8.9px;line-height:9.94px;color:#fff;transform:scaleX(0.955);transform-origin:right 0;">-77,349</div>
<div class="t" style="right:404.25px;top:379px;font-size:8.9px;line-height:9.94px;color:#fff;transform:scaleX(0.955);transform-origin:right 0;">-78,690</div>
<div class="t" style="right:358.50px;top:379px;font-size:8.9px;line-height:9.94px;color:#fff;transform:scaleX(0.955);transform-origin:right 0;">-87,545</div>
<div class="t" style="right:312.25px;top:379px;font-size:8.9px;line-height:9.94px;color:#fff;transform:scaleX(0.955);transform-origin:right 0;">-88,944</div>
<div class="t" style="right:264.75px;top:379px;font-size:8.9px;line-height:9.94px;color:#fff;transform:scaleX(0.955);transform-origin:right 0;">-89,228</div>
<div class="t" style="right:219.00px;top:379px;font-size:8.9px;line-height:9.94px;color:#fff;transform:scaleX(0.955);transform-origin:right 0;">-105,115</div>
<div class="t" style="right:174.25px;top:379px;font-size:8.9px;line-height:9.94px;color:#fff;transform:scaleX(0.955);transform-origin:right 0;">-106,641</div>
<div class="t" style="right:127.50px;top:379px;font-size:8.9px;line-height:9.94px;color:#fff;transform:scaleX(0.955);transform-origin:right 0;">-107,774</div>
<div class="t" style="right:76.25px;top:379px;font-size:8.9px;line-height:9.94px;color:#fff;transform:scaleX(0.955);transform-origin:right 0;">-957,244</div>
<div class="t" style="right:777.25px;top:404px;font-size:8.9px;line-height:9.94px;color:#1a6fc6;transform:scaleX(0.955);transform-origin:right 0;">-450,000</div>
<div class="t" style="right:730.25px;top:404px;font-size:8.9px;line-height:9.94px;color:#1a6fc6;transform:scaleX(0.955);transform-origin:right 0;">-433,182</div>
<div class="t" style="right:684.75px;top:404px;font-size:8.9px;line-height:9.94px;color:#1a6fc6;transform:scaleX(0.955);transform-origin:right 0;">-416,364</div>
<div class="t" style="right:634.25px;top:404px;font-size:8.9px;line-height:9.94px;color:#1a6fc6;transform:scaleX(0.955);transform-origin:right 0;">-399,546</div>
<div class="t" style="right:588.50px;top:404px;font-size:8.9px;line-height:9.94px;color:#1a6fc6;transform:scaleX(0.955);transform-origin:right 0;">-382,728</div>
<div class="t" style="right:542.75px;top:404px;font-size:8.9px;line-height:9.94px;color:#1a6fc6;transform:scaleX(0.955);transform-origin:right 0;">-365,910</div>
<div class="t" style="right:496.50px;top:404px;font-size:8.9px;line-height:9.94px;color:#1a6fc6;transform:scaleX(0.955);transform-origin:right 0;">-349,092</div>
<div class="t" style="right:450.25px;top:404px;font-size:8.9px;line-height:9.94px;color:#1a6fc6;transform:scaleX(0.955);transform-origin:right 0;">-332,274</div>
<div class="t" style="right:404.25px;top:404px;font-size:8.9px;line-height:9.94px;color:#1a6fc6;transform:scaleX(0.955);transform-origin:right 0;">-315,456</div>
<div class="t" style="right:358.50px;top:404px;font-size:8.9px;line-height:9.94px;color:#1a6fc6;transform:scaleX(0.955);transform-origin:right 0;">-298,638</div>
<div class="t" style="right:312.25px;top:404px;font-size:8.9px;line-height:9.94px;color:#1a6fc6;transform:scaleX(0.955);transform-origin:right 0;">-281,820</div>
<div class="t" style="right:264.75px;top:404px;font-size:8.9px;line-height:9.94px;color:#1a6fc6;transform:scaleX(0.955);transform-origin:right 0;">-265,002</div>
<div class="t" style="right:219.00px;top:404px;font-size:8.9px;line-height:9.94px;color:#1a6fc6;transform:scaleX(0.955);transform-origin:right 0;">-248,184</div>
<div class="t" style="right:174.25px;top:404px;font-size:8.9px;line-height:9.94px;color:#1a6fc6;transform:scaleX(0.955);transform-origin:right 0;">-231,366</div>
<div class="t" style="right:127.50px;top:404px;font-size:8.9px;line-height:9.94px;color:#1a6fc6;transform:scaleX(0.955);transform-origin:right 0;">-214,548</div>
<div class="t" style="right:76.25px;top:404px;font-size:8.9px;line-height:9.94px;color:#1a6fc6;transform:scaleX(0.955);transform-origin:right 0;">-4,290,012</div>
<div class="t" style="right:777.25px;top:455px;font-size:8.9px;line-height:9.94px;color:#1a6fc6;transform:scaleX(0.955);transform-origin:right 0;">-450,000</div>
<div class="t" style="right:730.25px;top:455px;font-size:8.9px;line-height:9.94px;color:#1a6fc6;transform:scaleX(0.955);transform-origin:right 0;">-433,182</div>
<div class="t" style="right:684.75px;top:455px;font-size:8.9px;line-height:9.94px;color:#1a6fc6;transform:scaleX(0.955);transform-origin:right 0;">-416,364</div>
<div class="t" style="right:634.25px;top:455px;font-size:8.9px;line-height:9.94px;color:#1a6fc6;transform:scaleX(0.955);transform-origin:right 0;">-399,546</div>
<div class="t" style="right:588.50px;top:455px;font-size:8.9px;line-height:9.94px;color:#1a6fc6;transform:scaleX(0.955);transform-origin:right 0;">-382,728</div>
<div class="t" style="right:542.75px;top:455px;font-size:8.9px;line-height:9.94px;color:#1a6fc6;transform:scaleX(0.955);transform-origin:right 0;">-365,910</div>
<div class="t" style="right:496.50px;top:455px;font-size:8.9px;line-height:9.94px;color:#1a6fc6;transform:scaleX(0.955);transform-origin:right 0;">-349,092</div>
<div class="t" style="right:450.25px;top:455px;font-size:8.9px;line-height:9.94px;color:#1a6fc6;transform:scaleX(0.955);transform-origin:right 0;">-332,274</div>
<div class="t" style="right:404.25px;top:455px;font-size:8.9px;line-height:9.94px;color:#1a6fc6;transform:scaleX(0.955);transform-origin:right 0;">-315,456</div>
<div class="t" style="right:358.50px;top:455px;font-size:8.9px;line-height:9.94px;color:#1a6fc6;transform:scaleX(0.955);transform-origin:right 0;">-298,638</div>
<div class="t" style="right:312.25px;top:455px;font-size:8.9px;line-height:9.94px;color:#1a6fc6;transform:scaleX(0.955);transform-origin:right 0;">-281,820</div>
<div class="t" style="right:264.75px;top:455px;font-size:8.9px;line-height:9.94px;color:#1a6fc6;transform:scaleX(0.955);transform-origin:right 0;">-265,002</div>
<div class="t" style="right:219.00px;top:455px;font-size:8.9px;line-height:9.94px;color:#1a6fc6;transform:scaleX(0.955);transform-origin:right 0;">-248,184</div>
<div class="t" style="right:174.25px;top:455px;font-size:8.9px;line-height:9.94px;color:#1a6fc6;transform:scaleX(0.955);transform-origin:right 0;">-231,366</div>
<div class="t" style="right:127.50px;top:455px;font-size:8.9px;line-height:9.94px;color:#1a6fc6;transform:scaleX(0.955);transform-origin:right 0;">-214,548</div>
<div class="t" style="right:777.25px;top:467px;font-size:8.9px;line-height:9.94px;color:#1a6fc6;transform:scaleX(0.955);transform-origin:right 0;">-512,244</div>
<div class="t" style="right:730.25px;top:467px;font-size:8.9px;line-height:9.94px;color:#1a6fc6;transform:scaleX(0.955);transform-origin:right 0;">-515,410</div>
<div class="t" style="right:684.75px;top:467px;font-size:8.9px;line-height:9.94px;color:#1a6fc6;transform:scaleX(0.955);transform-origin:right 0;">-484,872</div>
<div class="t" style="right:634.25px;top:467px;font-size:8.9px;line-height:9.94px;color:#1a6fc6;transform:scaleX(0.955);transform-origin:right 0;">-485,894</div>
<div class="t" style="right:588.50px;top:467px;font-size:8.9px;line-height:9.94px;color:#1a6fc6;transform:scaleX(0.955);transform-origin:right 0;">-452,223</div>
<div class="t" style="right:542.75px;top:467px;font-size:8.9px;line-height:9.94px;color:#1a6fc6;transform:scaleX(0.955);transform-origin:right 0;">-440,464</div>
<div class="t" style="right:496.50px;top:467px;font-size:8.9px;line-height:9.94px;color:#1a6fc6;transform:scaleX(0.955);transform-origin:right 0;">-419,433</div>
<div class="t" style="right:450.25px;top:467px;font-size:8.9px;line-height:9.94px;color:#1a6fc6;transform:scaleX(0.955);transform-origin:right 0;">-406,513</div>
<div class="t" style="right:404.25px;top:467px;font-size:8.9px;line-height:9.94px;color:#1a6fc6;transform:scaleX(0.955);transform-origin:right 0;">-391,036</div>
<div class="t" style="right:358.50px;top:467px;font-size:8.9px;line-height:9.94px;color:#1a6fc6;transform:scaleX(0.955);transform-origin:right 0;">-383,073</div>
<div class="t" style="right:312.25px;top:467px;font-size:8.9px;line-height:9.94px;color:#1a6fc6;transform:scaleX(0.955);transform-origin:right 0;">-367,654</div>
<div class="t" style="right:264.75px;top:467px;font-size:8.9px;line-height:9.94px;color:#1a6fc6;transform:scaleX(0.955);transform-origin:right 0;">-351,120</div>
<div class="t" style="right:219.00px;top:467px;font-size:8.9px;line-height:9.94px;color:#1a6fc6;transform:scaleX(0.955);transform-origin:right 0;">-353,299</div>
<div class="t" style="right:174.25px;top:467px;font-size:8.9px;line-height:9.94px;color:#1a6fc6;transform:scaleX(0.955);transform-origin:right 0;">-338,007</div>
<div class="t" style="right:127.50px;top:467px;font-size:8.9px;line-height:9.94px;color:#1a6fc6;transform:scaleX(0.955);transform-origin:right 0;">-322,322</div>
<div class="t" style="right:777.25px;top:480px;font-size:8.9px;line-height:9.94px;color:#1a6fc6;transform:scaleX(0.955);transform-origin:right 0;">-783,372</div>
<div class="t" style="right:730.25px;top:480px;font-size:8.9px;line-height:9.94px;color:#1a6fc6;transform:scaleX(0.955);transform-origin:right 0;">-540,684</div>
<div class="t" style="right:684.75px;top:480px;font-size:8.9px;line-height:9.94px;color:#1a6fc6;transform:scaleX(0.955);transform-origin:right 0;">-315,808</div>
<div class="t" style="right:634.25px;top:480px;font-size:8.9px;line-height:9.94px;color:#1a6fc6;transform:scaleX(0.955);transform-origin:right 0;">-47,770</div>
<div class="t" style="right:588.50px;top:480px;font-size:8.9px;line-height:9.94px;color:#1a6fc6;transform:scaleX(0.955);transform-origin:right 0;">190,914</div>
<div class="t" style="right:542.75px;top:480px;font-size:8.9px;line-height:9.94px;color:#1a6fc6;transform:scaleX(0.955);transform-origin:right 0;">431,285</div>
<div class="t" style="right:496.50px;top:480px;font-size:8.9px;line-height:9.94px;color:#1a6fc6;transform:scaleX(0.955);transform-origin:right 0;">667,439</div>
<div class="t" style="right:450.25px;top:480px;font-size:8.9px;line-height:9.94px;color:#1a6fc6;transform:scaleX(0.955);transform-origin:right 0;">914,439</div>
<div class="t" style="right:404.25px;top:480px;font-size:8.9px;line-height:9.94px;color:#1a6fc6;transform:scaleX(0.955);transform-origin:right 0;">1,172,722</div>
<div class="t" style="right:358.50px;top:480px;font-size:8.9px;line-height:9.94px;color:#1a6fc6;transform:scaleX(0.955);transform-origin:right 0;">1,462,276</div>
<div class="t" style="right:312.25px;top:480px;font-size:8.9px;line-height:9.94px;color:#1a6fc6;transform:scaleX(0.955);transform-origin:right 0;">1,768,245</div>
<div class="t" style="right:264.75px;top:480px;font-size:8.9px;line-height:9.94px;color:#1a6fc6;transform:scaleX(0.955);transform-origin:right 0;">2,079,828</div>
<div class="t" style="right:219.00px;top:480px;font-size:8.9px;line-height:9.94px;color:#1a6fc6;transform:scaleX(0.955);transform-origin:right 0;">2,452,978</div>
<div class="t" style="right:174.25px;top:480px;font-size:8.9px;line-height:9.94px;color:#1a6fc6;transform:scaleX(0.955);transform-origin:right 0;">2,853,066</div>
<div class="t" style="right:127.50px;top:480px;font-size:8.9px;line-height:9.94px;color:#1a6fc6;transform:scaleX(0.955);transform-origin:right 0;">3,261,443</div>
<div class="t" style="right:76.25px;top:480px;font-size:8.9px;line-height:9.94px;color:#1a6fc6;transform:scaleX(0.955);transform-origin:right 0;">6,999,514</div>
<div class="t" style="right:777.25px;top:506px;font-size:8.9px;line-height:9.94px;color:#1a6fc6;transform:scaleX(0.955);transform-origin:right 0;">-783,372</div>
<div class="t" style="right:730.25px;top:506px;font-size:8.9px;line-height:9.94px;color:#1a6fc6;transform:scaleX(0.955);transform-origin:right 0;">-540,684</div>
<div class="t" style="right:684.75px;top:506px;font-size:8.9px;line-height:9.94px;color:#1a6fc6;transform:scaleX(0.955);transform-origin:right 0;">-315,808</div>
<div class="t" style="right:634.25px;top:506px;font-size:8.9px;line-height:9.94px;color:#1a6fc6;transform:scaleX(0.955);transform-origin:right 0;">-47,770</div>
<div class="t" style="right:588.50px;top:506px;font-size:8.9px;line-height:9.94px;color:#1a6fc6;transform:scaleX(0.955);transform-origin:right 0;">190,914</div>
<div class="t" style="right:542.75px;top:506px;font-size:8.9px;line-height:9.94px;color:#1a6fc6;transform:scaleX(0.955);transform-origin:right 0;">431,285</div>
<div class="t" style="right:496.50px;top:506px;font-size:8.9px;line-height:9.94px;color:#1a6fc6;transform:scaleX(0.955);transform-origin:right 0;">667,439</div>
<div class="t" style="right:450.25px;top:506px;font-size:8.9px;line-height:9.94px;color:#1a6fc6;transform:scaleX(0.955);transform-origin:right 0;">914,439</div>
<div class="t" style="right:404.25px;top:506px;font-size:8.9px;line-height:9.94px;color:#1a6fc6;transform:scaleX(0.955);transform-origin:right 0;">1,172,722</div>
<div class="t" style="right:358.50px;top:506px;font-size:8.9px;line-height:9.94px;color:#1a6fc6;transform:scaleX(0.955);transform-origin:right 0;">1,462,276</div>
<div class="t" style="right:312.25px;top:506px;font-size:8.9px;line-height:9.94px;color:#1a6fc6;transform:scaleX(0.955);transform-origin:right 0;">1,768,245</div>
<div class="t" style="right:264.75px;top:506px;font-size:8.9px;line-height:9.94px;color:#1a6fc6;transform:scaleX(0.955);transform-origin:right 0;">2,079,828</div>
<div class="t" style="right:219.00px;top:506px;font-size:8.9px;line-height:9.94px;color:#1a6fc6;transform:scaleX(0.955);transform-origin:right 0;">2,452,978</div>
<div class="t" style="right:174.25px;top:506px;font-size:8.9px;line-height:9.94px;color:#1a6fc6;transform:scaleX(0.955);transform-origin:right 0;">2,853,066</div>
<div class="t" style="right:127.50px;top:506px;font-size:8.9px;line-height:9.94px;color:#1a6fc6;transform:scaleX(0.955);transform-origin:right 0;">3,261,443</div>
<div class="t" style="right:777.25px;top:518px;font-size:8.9px;line-height:9.94px;color:#1a6fc6;transform:scaleX(0.955);transform-origin:right 0;">-783,372</div>
<div class="t" style="right:730.25px;top:518px;font-size:8.9px;line-height:9.94px;color:#1a6fc6;transform:scaleX(0.955);transform-origin:right 0;">-540,684</div>
<div class="t" style="right:684.75px;top:518px;font-size:8.9px;line-height:9.94px;color:#1a6fc6;transform:scaleX(0.955);transform-origin:right 0;">-315,808</div>
<div class="t" style="right:634.25px;top:518px;font-size:8.9px;line-height:9.94px;color:#1a6fc6;transform:scaleX(0.955);transform-origin:right 0;">-47,770</div>
<div class="t" style="right:588.50px;top:518px;font-size:8.9px;line-height:9.94px;color:#1a6fc6;transform:scaleX(0.955);transform-origin:right 0;">190,914</div>
<div class="t" style="right:542.75px;top:518px;font-size:8.9px;line-height:9.94px;color:#1a6fc6;transform:scaleX(0.955);transform-origin:right 0;">431,285</div>
<div class="t" style="right:496.50px;top:518px;font-size:8.9px;line-height:9.94px;color:#1a6fc6;transform:scaleX(0.955);transform-origin:right 0;">667,439</div>
<div class="t" style="right:450.25px;top:518px;font-size:8.9px;line-height:9.94px;color:#1a6fc6;transform:scaleX(0.955);transform-origin:right 0;">914,439</div>
<div class="t" style="right:404.25px;top:518px;font-size:8.9px;line-height:9.94px;color:#1a6fc6;transform:scaleX(0.955);transform-origin:right 0;">1,172,722</div>
<div class="t" style="right:358.50px;top:518px;font-size:8.9px;line-height:9.94px;color:#1a6fc6;transform:scaleX(0.955);transform-origin:right 0;">1,462,276</div>
<div class="t" style="right:312.25px;top:518px;font-size:8.9px;line-height:9.94px;color:#1a6fc6;transform:scaleX(0.955);transform-origin:right 0;">1,768,245</div>
<div class="t" style="right:264.75px;top:518px;font-size:8.9px;line-height:9.94px;color:#1a6fc6;transform:scaleX(0.955);transform-origin:right 0;">2,079,828</div>
<div class="t" style="right:219.00px;top:518px;font-size:8.9px;line-height:9.94px;color:#1a6fc6;transform:scaleX(0.955);transform-origin:right 0;">2,452,978</div>
<div class="t" style="right:174.25px;top:518px;font-size:8.9px;line-height:9.94px;color:#1a6fc6;transform:scaleX(0.955);transform-origin:right 0;">2,853,066</div>
<div class="t" style="right:127.50px;top:518px;font-size:8.9px;line-height:9.94px;color:#1a6fc6;transform:scaleX(0.955);transform-origin:right 0;">3,261,443</div>
<div style="position:absolute;left:344.20px;top:216.50px;width:2.20px;height:1.00px;background:#7fb0dc;"></div>
<div style="position:absolute;left:440.10px;top:216.50px;width:2.20px;height:1.00px;background:#7fb0dc;"></div>
<div style="position:absolute;left:809.70px;top:216.50px;width:2.20px;height:1.00px;background:#7fb0dc;"></div>
<div style="position:absolute;left:854.00px;top:216.50px;width:2.20px;height:1.00px;background:#7fb0dc;"></div>
<div style="position:absolute;left:394.10px;top:419.80px;width:2.20px;height:1.00px;background:#7fb0dc;"></div>
<div style="position:absolute;left:0.00px;top:0.00px;width:1024.00px;height:31.50px;background:#137a42;"></div>
<svg style="position:absolute;left:10px;top:10px" width="12" height="12" viewBox="0 0 12 12">
<rect x="1.6" y="0.2" width="10.2" height="11.6" rx="1" fill="#cfe3d6" opacity="0.75"/>
<rect x="7" y="1.8" width="3.8" height="1.3" fill="#137a42"/><rect x="7" y="4.5" width="3.8" height="1.3" fill="#137a42"/><rect x="7" y="7.2" width="3.8" height="1.3" fill="#137a42"/>
<rect x="0.4" y="2.9" width="6.2" height="5.9" fill="#fff"/>
<path d="M2 4.3 L5 7.5 M5 4.3 L2 7.5" stroke="#137a42" stroke-width="1.2"/>
</svg>
<svg style="position:absolute;left:32px;top:10px" width="11" height="12" viewBox="0 0 11 12">
<rect x="0.5" y="0.5" width="10" height="11" rx="0.6" fill="none" stroke="#fff" stroke-width="0.95"/>
<path d="M2.6 0.5 V4.4 H8.4 V0.5" fill="none" stroke="#fff" stroke-width="0.9"/>
<path d="M2.8 11.5 V7.2 H8.2 V11.5" fill="none" stroke="#fff" stroke-width="0.9"/>
</svg>
<svg style="position:absolute;left:50px;top:8px" width="24" height="14" viewBox="0 0 24 14">
<path d="M1.1 7.3 L1.4 2.9 L5.6 7.1 Z" fill="#fff"/>
<path d="M3.2 5.1 C5 2.6 8.2 2.2 9.9 4 C11.3 5.5 11 7.6 9.6 9 L5 13" fill="none" stroke="#fff" stroke-width="1.1"/>
<path d="M15.8 6.8 L17.5 8.5 L19.2 6.8" fill="none" stroke="#fff" stroke-width="0.9"/>
</svg>
<svg style="position:absolute;left:76px;top:8px" width="24" height="14" viewBox="0 0 24 14">
<path d="M11.2 7.3 L10.9 2.9 L6.7 7.1 Z" fill="#5ea47c"/>
<path d="M9.1 5.1 C7.3 2.6 4.1 2.2 2.4 4 C1 5.5 1.3 7.6 2.7 9 L7.3 13" fill="none" stroke="#5ea47c" stroke-width="1.1"/>
<path d="M15.6 6.8 L17.3 8.5 L19 6.8" fill="none" stroke="#5ea47c" stroke-width="0.9"/>
</svg>
<svg style="position:absolute;left:103px;top:11px" width="8" height="8" viewBox="0 0 8 8">
<line x1="1.5" y1="3.2" x2="6.7" y2="3.2" stroke="#fff" stroke-width="0.9"/>
<path d="M2.5 5 L4.1 6.6 L5.7 5" fill="none" stroke="#fff" stroke-width="0.9"/>
</svg>
<div class="t" style="left:120.00px;top:12px;font-size:8.9px;line-height:9.94px;color:#fff;transform:scaleX(0.872);transform-origin:left 0;">Restaurant Financial Model.xlsx</div>
<div class="t" style="left:234.00px;top:12px;font-size:8.9px;line-height:9.94px;color:#fff;">-</div>
<div class="t" style="left:242.00px;top:12px;font-size:8.9px;line-height:9.94px;color:#fff;transform:scaleX(0.804);transform-origin:left 0;">Excel</div>
<div style="position:absolute;left:395.00px;top:5.50px;width:245.00px;height:20.50px;background:#cfe4d6;border-radius:3px;"></div>
<svg style="position:absolute;left:403px;top:10px" width="12" height="12" viewBox="0 0 12 12">
<circle cx="7.2" cy="4.9" r="3.1" fill="none" stroke="#3b7350" stroke-width="0.9"/>
<line x1="5" y1="7.1" x2="1.4" y2="10.7" stroke="#3b7350" stroke-width="0.9"/>
</svg>
<div class="t" style="left:423.00px;top:11px;font-size:9.2px;line-height:10.28px;color:#2f6e46;transform:scaleX(0.895);transform-origin:left 0;">Search</div>
<div style="position:absolute;left:904.00px;top:8.00px;width:16.00px;height:16.00px;background:#c239b3;border-radius:50%;"></div>
<div class="t" style="left:909.00px;top:13px;font-size:7.2px;line-height:8.04px;color:#fff;transform:scaleX(0.720);transform-origin:left 0;">RS</div>
<div style="position:absolute;left:941.00px;top:15.10px;width:7.30px;height:0.90px;background:#fff;"></div>
<svg style="position:absolute;left:972.5px;top:12px" width="9" height="9" viewBox="0 0 9 9">
<rect x="0.8" y="2.3" width="5.6" height="5.6" rx="0.9" fill="none" stroke="#fff" stroke-width="0.9"/>
<path d="M2.3 0.9 H6.4 Q7.9 0.9 7.9 2.4 V6.3" fill="none" stroke="#fff" stroke-width="0.9"/>
</svg>
<svg style="position:absolute;left:1004.8px;top:12px" width="8" height="8" viewBox="0 0 8 8">
<path d="M0.5 0.5 L7.5 7.5 M7.5 0.5 L0.5 7.5" stroke="#fff" stroke-width="0.9"/>
</svg>
<div style="position:absolute;left:0.00px;top:31.50px;width:1024.00px;height:20.50px;background:#eceef1;"></div>
<div class="t" style="left:14.50px;top:38px;font-size:9.5px;line-height:10.61px;color:#404040;transform:scaleX(0.843);transform-origin:left 0;">File</div>
<div class="t" style="left:45.00px;top:38px;font-size:9.5px;line-height:10.61px;color:#404040;transform:scaleX(0.947);transform-origin:left 0;">Home</div>
<div class="t" style="left:82.50px;top:38px;font-size:9.5px;line-height:10.61px;color:#404040;transform:scaleX(0.930);transform-origin:left 0;">Insert</div>
<div class="t" style="left:117.60px;top:38px;font-size:9.5px;line-height:10.61px;color:#404040;transform:scaleX(0.938);transform-origin:left 0;">Draw</div>
<div class="t" style="left:151.60px;top:38px;font-size:9.5px;line-height:10.61px;color:#404040;transform:scaleX(0.926);transform-origin:left 0;">Page Layout</div>
<div class="t" style="left:214.00px;top:38px;font-size:9.5px;line-height:10.61px;color:#404040;transform:scaleX(0.935);transform-origin:left 0;">Formulas</div>
<div class="t" style="left:264.00px;top:38px;font-size:9.5px;line-height:10.61px;color:#404040;transform:scaleX(0.907);transform-origin:left 0;">Data</div>
<div class="t" style="left:296.00px;top:38px;font-size:9.5px;line-height:10.61px;color:#404040;transform:scaleX(0.880);transform-origin:left 0;">Review</div>
<div class="t" style="left:336.90px;top:38px;font-size:9.5px;line-height:10.61px;color:#404040;transform:scaleX(0.948);transform-origin:left 0;">View</div>
<div class="t" style="left:369.40px;top:38px;font-size:9.5px;line-height:10.61px;color:#404040;transform:scaleX(0.931);transform-origin:left 0;">Developer</div>
<div class="t" style="left:422.80px;top:38px;font-size:9.5px;line-height:10.61px;color:#404040;transform:scaleX(0.944);transform-origin:left 0;">Help</div>
<div class="t" style="left:454.00px;top:38px;font-size:9.5px;line-height:10.61px;color:#404040;transform:scaleX(0.977);transform-origin:left 0;">Acrobat</div>
<div class="t" style="left:499.00px;top:38px;font-size:9.5px;line-height:10.61px;color:#404040;transform:scaleX(0.927);transform-origin:left 0;">Power Pivot</div>
<div style="position:absolute;left:969.00px;top:34.20px;width:47.30px;height:16.00px;background:#137a42;border-radius:3px;"></div>
<svg style="position:absolute;left:971px;top:37px" width="10" height="10" viewBox="0 0 10 10">
<path d="M3.5 4.5 H1.2 V8.6 H8 V6.5" fill="none" stroke="#fff" stroke-width="0.9"/>
<path d="M3.2 7.2 C3.5 5 5 3.8 7.6 3.8 M6.2 1.8 L8.6 3.8 L6.2 5.8" fill="none" stroke="#fff" stroke-width="0.9"/>
</svg>
<div class="t" style="left:983.10px;top:37px;font-size:9.2px;line-height:10.28px;color:#fff;transform:scaleX(0.904);transform-origin:left 0;">Share</div>
<svg style="position:absolute;left:1008px;top:40px" width="6" height="5" viewBox="0 0 6 5">
<path d="M1 1.2 L3 3.2 L5 1.2" fill="none" stroke="#fff" stroke-width="0.9"/>
</svg>
<div style="position:absolute;left:0.00px;top:52.00px;width:1011.00px;height:12.60px;background:#f3f3f3;"></div>
<div style="position:absolute;left:0.00px;top:64.10px;width:1011.00px;height:0.80px;background:#d0d0d0;"></div>
<svg style="position:absolute;left:6px;top:54px" width="10" height="10" viewBox="0 0 10 10"><path d="M9.5 0.5 V9.5 H0.5 Z" fill="#b9b9b9"/></svg>
<div style="position:absolute;left:17.00px;top:52.00px;width:0.80px;height:521.00px;background:#d0d0d0;"></div>
<div style="position:absolute;left:248.75px;top:52.00px;width:47.00px;height:12.60px;background:#d3d3d3;"></div>
<div style="position:absolute;left:248.75px;top:63.60px;width:47.00px;height:1.30px;background:#1e7145;"></div>
<div style="position:absolute;left:40.60px;top:53.00px;width:0.80px;height:11.50px;background:#d4d4d4;"></div>
<div style="position:absolute;left:60.10px;top:53.00px;width:0.80px;height:11.50px;background:#d4d4d4;"></div>
<div style="position:absolute;left:103.35px;top:53.00px;width:0.80px;height:11.50px;background:#d4d4d4;"></div>
<div style="position:absolute;left:145.10px;top:53.00px;width:0.80px;height:11.50px;background:#d4d4d4;"></div>
<div style="position:absolute;left:202.85px;top:53.00px;width:0.80px;height:11.50px;background:#d4d4d4;"></div>
<div style="position:absolute;left:248.35px;top:53.00px;width:0.80px;height:11.50px;background:#d4d4d4;"></div>
<div style="position:absolute;left:295.35px;top:53.00px;width:0.80px;height:11.50px;background:#d4d4d4;"></div>
<div style="position:absolute;left:340.85px;top:53.00px;width:0.80px;height:11.50px;background:#d4d4d4;"></div>
<div style="position:absolute;left:391.35px;top:53.00px;width:0.80px;height:11.50px;background:#d4d4d4;"></div>
<div style="position:absolute;left:437.10px;top:53.00px;width:0.80px;height:11.50px;background:#d4d4d4;"></div>
<div style="position:absolute;left:482.85px;top:53.00px;width:0.80px;height:11.50px;background:#d4d4d4;"></div>
<div style="position:absolute;left:529.10px;top:53.00px;width:0.80px;height:11.50px;background:#d4d4d4;"></div>
<div style="position:absolute;left:575.35px;top:53.00px;width:0.80px;height:11.50px;background:#d4d4d4;"></div>
<div style="position:absolute;left:621.35px;top:53.00px;width:0.80px;height:11.50px;background:#d4d4d4;"></div>
<div style="position:absolute;left:667.10px;top:53.00px;width:0.80px;height:11.50px;background:#d4d4d4;"></div>
<div style="position:absolute;left:713.35px;top:53.00px;width:0.80px;height:11.50px;background:#d4d4d4;"></div>
<div style="position:absolute;left:760.85px;top:53.00px;width:0.80px;height:11.50px;background:#d4d4d4;"></div>
<div style="position:absolute;left:806.60px;top:53.00px;width:0.80px;height:11.50px;background:#d4d4d4;"></div>
<div style="position:absolute;left:851.35px;top:53.00px;width:0.80px;height:11.50px;background:#d4d4d4;"></div>
<div style="position:absolute;left:898.10px;top:53.00px;width:0.80px;height:11.50px;background:#d4d4d4;"></div>
<div style="position:absolute;left:949.35px;top:53.00px;width:0.80px;height:11.50px;background:#d4d4d4;"></div>
<div style="position:absolute;left:996.35px;top:53.00px;width:0.80px;height:11.50px;background:#d4d4d4;"></div>
<div class="t" style="left:-71.00px;width:200px;text-align:center;top:54px;font-size:9.6px;line-height:10.72px;color:#3a3a3a;transform:scaleX(0.880);transform-origin:center 0;">A</div>
<div class="t" style="left:-49.25px;width:200px;text-align:center;top:54px;font-size:9.6px;line-height:10.72px;color:#3a3a3a;transform:scaleX(0.880);transform-origin:center 0;">B</div>
<div class="t" style="left:-17.88px;width:200px;text-align:center;top:54px;font-size:9.6px;line-height:10.72px;color:#3a3a3a;transform:scaleX(0.880);transform-origin:center 0;">C</div>
<div class="t" style="left:24.62px;width:200px;text-align:center;top:54px;font-size:9.6px;line-height:10.72px;color:#3a3a3a;transform:scaleX(0.880);transform-origin:center 0;">D</div>
<div class="t" style="left:74.38px;width:200px;text-align:center;top:54px;font-size:9.6px;line-height:10.72px;color:#3a3a3a;transform:scaleX(0.880);transform-origin:center 0;">E</div>
<div class="t" style="left:126.00px;width:200px;text-align:center;top:54px;font-size:9.6px;line-height:10.72px;color:#3a3a3a;transform:scaleX(0.880);transform-origin:center 0;">F</div>
<div class="t" style="left:172.25px;width:200px;text-align:center;top:54px;font-size:9.6px;line-height:10.72px;color:#1e7145;transform:scaleX(0.880);transform-origin:center 0;">G</div>
<div class="t" style="left:218.50px;width:200px;text-align:center;top:54px;font-size:9.6px;line-height:10.72px;color:#3a3a3a;transform:scaleX(0.880);transform-origin:center 0;">H</div>
<div class="t" style="left:266.50px;width:200px;text-align:center;top:54px;font-size:9.6px;line-height:10.72px;color:#3a3a3a;transform:scaleX(0.880);transform-origin:center 0;">I</div>
<div class="t" style="left:314.62px;width:200px;text-align:center;top:54px;font-size:9.6px;line-height:10.72px;color:#3a3a3a;transform:scaleX(0.880);transform-origin:center 0;">J</div>
<div class="t" style="left:360.38px;width:200px;text-align:center;top:54px;font-size:9.6px;line-height:10.72px;color:#3a3a3a;transform:scaleX(0.880);transform-origin:center 0;">K</div>
<div class="t" style="left:406.38px;width:200px;text-align:center;top:54px;font-size:9.6px;line-height:10.72px;color:#3a3a3a;transform:scaleX(0.880);transform-origin:center 0;">L</div>
<div class="t" style="left:452.62px;width:200px;text-align:center;top:54px;font-size:9.6px;line-height:10.72px;color:#3a3a3a;transform:scaleX(0.880);transform-origin:center 0;">M</div>
<div class="t" style="left:498.75px;width:200px;text-align:center;top:54px;font-size:9.6px;line-height:10.72px;color:#3a3a3a;transform:scaleX(0.880);transform-origin:center 0;">N</div>
<div class="t" style="left:544.62px;width:200px;text-align:center;top:54px;font-size:9.6px;line-height:10.72px;color:#3a3a3a;transform:scaleX(0.880);transform-origin:center 0;">O</div>
<div class="t" style="left:590.62px;width:200px;text-align:center;top:54px;font-size:9.6px;line-height:10.72px;color:#3a3a3a;transform:scaleX(0.880);transform-origin:center 0;">P</div>
<div class="t" style="left:637.50px;width:200px;text-align:center;top:54px;font-size:9.6px;line-height:10.72px;color:#3a3a3a;transform:scaleX(0.880);transform-origin:center 0;">Q</div>
<div class="t" style="left:684.12px;width:200px;text-align:center;top:54px;font-size:9.6px;line-height:10.72px;color:#3a3a3a;transform:scaleX(0.880);transform-origin:center 0;">R</div>
<div class="t" style="left:729.38px;width:200px;text-align:center;top:54px;font-size:9.6px;line-height:10.72px;color:#3a3a3a;transform:scaleX(0.880);transform-origin:center 0;">S</div>
<div class="t" style="left:775.12px;width:200px;text-align:center;top:54px;font-size:9.6px;line-height:10.72px;color:#3a3a3a;transform:scaleX(0.880);transform-origin:center 0;">T</div>
<div class="t" style="left:824.12px;width:200px;text-align:center;top:54px;font-size:9.6px;line-height:10.72px;color:#3a3a3a;transform:scaleX(0.880);transform-origin:center 0;">U</div>
<div class="t" style="left:873.25px;width:200px;text-align:center;top:54px;font-size:9.6px;line-height:10.72px;color:#3a3a3a;transform:scaleX(0.880);transform-origin:center 0;">V</div>
<div style="position:absolute;left:0.00px;top:64.60px;width:17.00px;height:508.40px;background:#f3f3f3;"></div>
<div style="position:absolute;left:17.00px;top:64.60px;width:0.80px;height:508.40px;background:#c8c8c8;"></div>
<div style="position:absolute;left:0.00px;top:77.20px;width:17.00px;height:0.80px;background:#d9d9d9;"></div>
<div class="t" style="left:-90.80px;width:200px;text-align:center;top:67px;font-size:9.6px;line-height:10.72px;color:#3a3a3a;transform:scaleX(0.950);transform-origin:center 0;">1</div>
<div style="position:absolute;left:0.00px;top:93.30px;width:17.00px;height:0.80px;background:#d9d9d9;"></div>
<div class="t" style="left:-90.80px;width:200px;text-align:center;top:83px;font-size:9.6px;line-height:10.72px;color:#3a3a3a;transform:scaleX(0.950);transform-origin:center 0;">2</div>
<div style="position:absolute;left:0.00px;top:105.90px;width:17.00px;height:0.80px;background:#d9d9d9;"></div>
<div class="t" style="left:-90.80px;width:200px;text-align:center;top:95px;font-size:9.6px;line-height:10.72px;color:#3a3a3a;transform:scaleX(0.950);transform-origin:center 0;">3</div>
<div style="position:absolute;left:0.00px;top:118.60px;width:17.00px;height:0.80px;background:#d9d9d9;"></div>
<div class="t" style="left:-90.80px;width:200px;text-align:center;top:108px;font-size:9.6px;line-height:10.72px;color:#3a3a3a;transform:scaleX(0.950);transform-origin:center 0;">4</div>
<div style="position:absolute;left:0.00px;top:131.40px;width:17.00px;height:0.80px;background:#d9d9d9;"></div>
<div class="t" style="left:-90.80px;width:200px;text-align:center;top:121px;font-size:9.6px;line-height:10.72px;color:#3a3a3a;transform:scaleX(0.950);transform-origin:center 0;">5</div>
<div style="position:absolute;left:0.00px;top:144.90px;width:17.00px;height:0.80px;background:#d9d9d9;"></div>
<div class="t" style="left:-90.80px;width:200px;text-align:center;top:134px;font-size:9.6px;line-height:10.72px;color:#3a3a3a;transform:scaleX(0.950);transform-origin:center 0;">6</div>
<div style="position:absolute;left:0.00px;top:158.35px;width:17.00px;height:0.80px;background:#d9d9d9;"></div>
<div class="t" style="left:-90.80px;width:200px;text-align:center;top:148px;font-size:9.6px;line-height:10.72px;color:#3a3a3a;transform:scaleX(0.950);transform-origin:center 0;">7</div>
<div style="position:absolute;left:0.00px;top:171.09px;width:17.00px;height:0.80px;background:#d9d9d9;"></div>
<div class="t" style="left:-90.80px;width:200px;text-align:center;top:160px;font-size:9.6px;line-height:10.72px;color:#3a3a3a;transform:scaleX(0.950);transform-origin:center 0;">8</div>
<div style="position:absolute;left:0.00px;top:183.83px;width:17.00px;height:0.80px;background:#d9d9d9;"></div>
<div class="t" style="left:-90.80px;width:200px;text-align:center;top:173px;font-size:9.6px;line-height:10.72px;color:#3a3a3a;transform:scaleX(0.950);transform-origin:center 0;">9</div>
<div style="position:absolute;left:0.00px;top:196.57px;width:17.00px;height:0.80px;background:#d9d9d9;"></div>
<div class="t" style="left:-90.80px;width:200px;text-align:center;top:186px;font-size:9.6px;line-height:10.72px;color:#3a3a3a;transform:scaleX(0.950);transform-origin:center 0;">10</div>
<div style="position:absolute;left:0.00px;top:209.31px;width:17.00px;height:0.80px;background:#d9d9d9;"></div>
<div class="t" style="left:-90.80px;width:200px;text-align:center;top:199px;font-size:9.6px;line-height:10.72px;color:#3a3a3a;transform:scaleX(0.950);transform-origin:center 0;">11</div>
<div style="position:absolute;left:0.00px;top:222.06px;width:17.00px;height:0.80px;background:#d9d9d9;"></div>
<div class="t" style="left:-90.80px;width:200px;text-align:center;top:211px;font-size:9.6px;line-height:10.72px;color:#3a3a3a;transform:scaleX(0.950);transform-origin:center 0;">12</div>
<div style="position:absolute;left:0.00px;top:234.80px;width:17.00px;height:0.80px;background:#d9d9d9;"></div>
<div class="t" style="left:-90.80px;width:200px;text-align:center;top:224px;font-size:9.6px;line-height:10.72px;color:#3a3a3a;transform:scaleX(0.950);transform-origin:center 0;">13</div>
<div style="position:absolute;left:0.00px;top:247.54px;width:17.00px;height:0.80px;background:#d9d9d9;"></div>
<div class="t" style="left:-90.80px;width:200px;text-align:center;top:237px;font-size:9.6px;line-height:10.72px;color:#3a3a3a;transform:scaleX(0.950);transform-origin:center 0;">14</div>
<div style="position:absolute;left:0.00px;top:260.28px;width:17.00px;height:0.80px;background:#d9d9d9;"></div>
<div class="t" style="left:-90.80px;width:200px;text-align:center;top:250px;font-size:9.6px;line-height:10.72px;color:#3a3a3a;transform:scaleX(0.950);transform-origin:center 0;">15</div>
<div style="position:absolute;left:0.00px;top:273.02px;width:17.00px;height:0.80px;background:#d9d9d9;"></div>
<div class="t" style="left:-90.80px;width:200px;text-align:center;top:262px;font-size:9.6px;line-height:10.72px;color:#3a3a3a;transform:scaleX(0.950);transform-origin:center 0;">16</div>
<div style="position:absolute;left:0.00px;top:285.77px;width:17.00px;height:0.80px;background:#d9d9d9;"></div>
<div class="t" style="left:-90.80px;width:200px;text-align:center;top:275px;font-size:9.6px;line-height:10.72px;color:#3a3a3a;transform:scaleX(0.950);transform-origin:center 0;">17</div>
<div style="position:absolute;left:0.00px;top:298.96px;width:17.00px;height:0.80px;background:#d9d9d9;"></div>
<div class="t" style="left:-90.80px;width:200px;text-align:center;top:288px;font-size:9.6px;line-height:10.72px;color:#3a3a3a;transform:scaleX(0.950);transform-origin:center 0;">18</div>
<div style="position:absolute;left:0.00px;top:311.70px;width:17.00px;height:0.80px;background:#d9d9d9;"></div>
<div class="t" style="left:-90.80px;width:200px;text-align:center;top:301px;font-size:9.6px;line-height:10.72px;color:#3a3a3a;transform:scaleX(0.950);transform-origin:center 0;">19</div>
<div style="position:absolute;left:0.00px;top:324.44px;width:17.00px;height:0.80px;background:#d9d9d9;"></div>
<div class="t" style="left:-90.80px;width:200px;text-align:center;top:314px;font-size:9.6px;line-height:10.72px;color:#3a3a3a;transform:scaleX(0.950);transform-origin:center 0;">20</div>
<div style="position:absolute;left:0.00px;top:336.73px;width:17.00px;height:0.80px;background:#d9d9d9;"></div>
<div class="t" style="left:-90.80px;width:200px;text-align:center;top:326px;font-size:9.6px;line-height:10.72px;color:#3a3a3a;transform:scaleX(0.950);transform-origin:center 0;">21</div>
<div style="position:absolute;left:0.00px;top:349.48px;width:17.00px;height:0.80px;background:#d9d9d9;"></div>
<div class="t" style="left:-90.80px;width:200px;text-align:center;top:339px;font-size:9.6px;line-height:10.72px;color:#3a3a3a;transform:scaleX(0.950);transform-origin:center 0;">22</div>
<div style="position:absolute;left:0.00px;top:362.22px;width:17.00px;height:0.80px;background:#d9d9d9;"></div>
<div class="t" style="left:-90.80px;width:200px;text-align:center;top:352px;font-size:9.6px;line-height:10.72px;color:#3a3a3a;transform:scaleX(0.950);transform-origin:center 0;">23</div>
<div style="position:absolute;left:0.00px;top:375.56px;width:17.00px;height:0.80px;background:#d9d9d9;"></div>
<div class="t" style="left:-90.80px;width:200px;text-align:center;top:365px;font-size:9.6px;line-height:10.72px;color:#3a3a3a;transform:scaleX(0.950);transform-origin:center 0;">24</div>
<div style="position:absolute;left:0.00px;top:388.30px;width:17.00px;height:0.80px;background:#d9d9d9;"></div>
<div class="t" style="left:-90.80px;width:200px;text-align:center;top:378px;font-size:9.6px;line-height:10.72px;color:#3a3a3a;transform:scaleX(0.950);transform-origin:center 0;">25</div>
<div style="position:absolute;left:0.00px;top:401.44px;width:17.00px;height:0.80px;background:#d9d9d9;"></div>
<div class="t" style="left:-90.80px;width:200px;text-align:center;top:391px;font-size:9.6px;line-height:10.72px;color:#3a3a3a;transform:scaleX(0.950);transform-origin:center 0;">26</div>
<div style="position:absolute;left:0.00px;top:413.19px;width:17.00px;height:0.80px;background:#d9d9d9;"></div>
<div class="t" style="left:-90.80px;width:200px;text-align:center;top:403px;font-size:9.6px;line-height:10.72px;color:#3a3a3a;transform:scaleX(0.950);transform-origin:center 0;">27</div>
<div style="position:absolute;left:0.00px;top:425.93px;width:17.00px;height:0.80px;background:#d9d9d9;"></div>
<div class="t" style="left:-90.80px;width:200px;text-align:center;top:415px;font-size:9.6px;line-height:10.72px;color:#3a3a3a;transform:scaleX(0.950);transform-origin:center 0;">28</div>
<div style="position:absolute;left:0.00px;top:438.67px;width:17.00px;height:0.80px;background:#d9d9d9;"></div>
<div class="t" style="left:-90.80px;width:200px;text-align:center;top:428px;font-size:9.6px;line-height:10.72px;color:#3a3a3a;transform:scaleX(0.950);transform-origin:center 0;">29</div>
<div style="position:absolute;left:0.00px;top:451.41px;width:17.00px;height:0.80px;background:#d9d9d9;"></div>
<div class="t" style="left:-90.80px;width:200px;text-align:center;top:441px;font-size:9.6px;line-height:10.72px;color:#3a3a3a;transform:scaleX(0.950);transform-origin:center 0;">30</div>
<div style="position:absolute;left:0.00px;top:464.15px;width:17.00px;height:0.80px;background:#d9d9d9;"></div>
<div class="t" style="left:-90.80px;width:200px;text-align:center;top:454px;font-size:9.6px;line-height:10.72px;color:#3a3a3a;transform:scaleX(0.950);transform-origin:center 0;">31</div>
<div style="position:absolute;left:0.00px;top:476.90px;width:17.00px;height:0.80px;background:#d9d9d9;"></div>
<div class="t" style="left:-90.80px;width:200px;text-align:center;top:466px;font-size:9.6px;line-height:10.72px;color:#3a3a3a;transform:scaleX(0.950);transform-origin:center 0;">32</div>
<div style="position:absolute;left:0.00px;top:489.64px;width:17.00px;height:0.80px;background:#d9d9d9;"></div>
<div class="t" style="left:-90.80px;width:200px;text-align:center;top:479px;font-size:9.6px;line-height:10.72px;color:#3a3a3a;transform:scaleX(0.950);transform-origin:center 0;">33</div>
<div style="position:absolute;left:0.00px;top:502.38px;width:17.00px;height:0.80px;background:#d9d9d9;"></div>
<div class="t" style="left:-90.80px;width:200px;text-align:center;top:492px;font-size:9.6px;line-height:10.72px;color:#3a3a3a;transform:scaleX(0.950);transform-origin:center 0;">34</div>
<div style="position:absolute;left:0.00px;top:515.12px;width:17.00px;height:0.80px;background:#d9d9d9;"></div>
<div class="t" style="left:-90.80px;width:200px;text-align:center;top:505px;font-size:9.6px;line-height:10.72px;color:#3a3a3a;transform:scaleX(0.950);transform-origin:center 0;">35</div>
<div style="position:absolute;left:0.00px;top:527.86px;width:17.00px;height:0.80px;background:#d9d9d9;"></div>
<div class="t" style="left:-90.80px;width:200px;text-align:center;top:517px;font-size:9.6px;line-height:10.72px;color:#3a3a3a;transform:scaleX(0.950);transform-origin:center 0;">36</div>
<div style="position:absolute;left:0.00px;top:540.61px;width:17.00px;height:0.80px;background:#d9d9d9;"></div>
<div class="t" style="left:-90.80px;width:200px;text-align:center;top:530px;font-size:9.6px;line-height:10.72px;color:#3a3a3a;transform:scaleX(0.950);transform-origin:center 0;">37</div>
<div style="position:absolute;left:0.00px;top:553.35px;width:17.00px;height:0.80px;background:#d9d9d9;"></div>
<div class="t" style="left:-90.80px;width:200px;text-align:center;top:543px;font-size:9.6px;line-height:10.72px;color:#3a3a3a;transform:scaleX(0.950);transform-origin:center 0;">38</div>
<div style="position:absolute;left:0.00px;top:566.09px;width:17.00px;height:0.80px;background:#d9d9d9;"></div>
<div class="t" style="left:-90.80px;width:200px;text-align:center;top:555px;font-size:9.6px;line-height:10.72px;color:#3a3a3a;transform:scaleX(0.950);transform-origin:center 0;">39</div>
<div style="position:absolute;left:0.00px;top:578.83px;width:17.00px;height:0.80px;background:#d9d9d9;"></div>
<div class="t" style="left:-90.80px;width:200px;text-align:center;top:568px;font-size:9.6px;line-height:10.72px;color:#3a3a3a;transform:scaleX(0.950);transform-origin:center 0;">40</div>
<div style="position:absolute;left:1011.00px;top:52.00px;width:13.00px;height:521.00px;background:#eeeeee;"></div>
<div style="position:absolute;left:1012.00px;top:53.30px;width:11.80px;height:519.00px;background:#fafafa;border-radius:5px;"></div>
<svg style="position:absolute;left:1014px;top:55px" width="8" height="6" viewBox="0 0 8 6"><path d="M1 4.8 L4 1 L7 4.8 Z" fill="#6e6e6e"/></svg>
<div style="position:absolute;left:1015.00px;top:63.60px;width:6.00px;height:133.50px;background:#7a7a7a;border-radius:3px;"></div>
<svg style="position:absolute;left:1014px;top:566px" width="8" height="6" viewBox="0 0 8 6"><path d="M1 1.2 L4 5 L7 1.2 Z" fill="#6e6e6e"/></svg>
<div style="position:absolute;left:0.00px;top:573.00px;width:1024.00px;height:21.20px;background:#e7e9ec;"></div>
<div style="position:absolute;left:212.00px;top:573.00px;width:61.00px;height:6.00px;background:#ffffff;"></div>
<div style="position:absolute;left:210.00px;top:573.00px;width:10.00px;height:10.00px;background:#e7e9ec;border-top-right-radius:4px;"></div>
<div style="position:absolute;left:266.00px;top:573.00px;width:10.00px;height:10.00px;background:#e7e9ec;border-top-left-radius:4px;"></div>
<div style="position:absolute;left:220.00px;top:572.00px;width:46.00px;height:19.50px;background:#ffffff;border-radius:0 0 4px 4px;"></div>
<div style="position:absolute;left:225.60px;top:588.80px;width:34.40px;height:1.30px;background:#107c41;"></div>
<div class="t" style="left:226.00px;top:577px;font-size:9.2px;line-height:10.28px;color:#262626;font-weight:bold;transform:scaleX(0.930);transform-origin:left 0;">BS 2025</div>
<svg style="position:absolute;left:15px;top:578px" width="8" height="11" viewBox="0 0 8 11"><path d="M5.5 1.5 L2 5.5 L5.5 9.5" fill="none" stroke="#9a9a9a" stroke-width="1"/></svg>
<svg style="position:absolute;left:36px;top:578px" width="8" height="11" viewBox="0 0 8 11"><path d="M2.5 1.5 L6 5.5 L2.5 9.5" fill="none" stroke="#444" stroke-width="1"/></svg>
<div style="position:absolute;left:123.00px;top:575.50px;width:41.25px;height:15.75px;background:#fbf799;border-radius:3px;"></div>
<div style="position:absolute;left:401.00px;top:575.50px;width:42.00px;height:15.75px;background:#fbf799;border-radius:3px;"></div>
<div style="position:absolute;left:679.50px;top:575.50px;width:42.00px;height:15.75px;background:#fbf799;border-radius:3px;"></div>
<div class="t" style="left:81.25px;top:579px;font-size:9.4px;line-height:10.50px;color:#3b3b3b;transform:scaleX(1.025);transform-origin:left 0;">How to</div>
<div class="t" style="left:128.75px;top:579px;font-size:9.4px;line-height:10.50px;color:#3b3b3b;transform:scaleX(0.910);transform-origin:left 0;">IS 2025</div>
<div class="t" style="left:175.75px;top:579px;font-size:9.4px;line-height:10.50px;color:#3b3b3b;transform:scaleX(0.901);transform-origin:left 0;">CF 2025</div>
<div class="t" style="left:278.00px;top:579px;font-size:9.4px;line-height:10.50px;color:#3b3b3b;transform:scaleX(0.966);transform-origin:left 0;">Statements Summary 2025</div>
<div class="t" style="left:407.25px;top:579px;font-size:9.4px;line-height:10.50px;color:#3b3b3b;transform:scaleX(0.926);transform-origin:left 0;">IS 2026</div>
<div class="t" style="left:454.00px;top:579px;font-size:9.4px;line-height:10.50px;color:#3b3b3b;transform:scaleX(0.922);transform-origin:left 0;">CF 2026</div>
<div class="t" style="left:504.75px;top:579px;font-size:9.4px;line-height:10.50px;color:#3b3b3b;transform:scaleX(0.894);transform-origin:left 0;">BS 2026</div>
<div class="t" style="left:556.50px;top:579px;font-size:9.4px;line-height:10.50px;color:#3b3b3b;transform:scaleX(0.970);transform-origin:left 0;">Statements Summary 2026</div>
<div class="t" style="left:685.75px;top:579px;font-size:9.4px;line-height:10.50px;color:#3b3b3b;transform:scaleX(0.926);transform-origin:left 0;">IS 2027</div>
<div class="t" style="left:732.50px;top:579px;font-size:9.4px;line-height:10.50px;color:#3b3b3b;transform:scaleX(0.901);transform-origin:left 0;">CF 2027</div>
<div class="t" style="left:783.00px;top:579px;font-size:9.4px;line-height:10.50px;color:#3b3b3b;transform:scaleX(0.901);transform-origin:left 0;">BS 2027</div>
<div class="t" style="left:834.25px;top:579px;font-size:9.4px;line-height:10.50px;color:#3b3b3b;transform:scaleX(0.971);transform-origin:left 0;">Statements Sum</div>
<div style="position:absolute;left:118.35px;top:577.50px;width:0.80px;height:12.50px;background:#d2d4d7;"></div>
<div style="position:absolute;left:166.60px;top:577.50px;width:0.80px;height:12.50px;background:#d2d4d7;"></div>
<div style="position:absolute;left:217.20px;top:577.50px;width:0.80px;height:12.50px;background:#d2d4d7;"></div>
<div style="position:absolute;left:267.90px;top:577.50px;width:0.80px;height:12.50px;background:#d2d4d7;"></div>
<div style="position:absolute;left:397.60px;top:577.50px;width:0.80px;height:12.50px;background:#d2d4d7;"></div>
<div style="position:absolute;left:445.10px;top:577.50px;width:0.80px;height:12.50px;background:#d2d4d7;"></div>
<div style="position:absolute;left:496.10px;top:577.50px;width:0.80px;height:12.50px;background:#d2d4d7;"></div>
<div style="position:absolute;left:545.35px;top:577.50px;width:0.80px;height:12.50px;background:#d2d4d7;"></div>
<div style="position:absolute;left:675.35px;top:577.50px;width:0.80px;height:12.50px;background:#d2d4d7;"></div>
<div style="position:absolute;left:724.10px;top:577.50px;width:0.80px;height:12.50px;background:#d2d4d7;"></div>
<div style="position:absolute;left:773.85px;top:577.50px;width:0.80px;height:12.50px;background:#d2d4d7;"></div>
<div style="position:absolute;left:824.60px;top:577.50px;width:0.80px;height:12.50px;background:#d2d4d7;"></div>
<div style="position:absolute;left:908.50px;top:581.00px;width:1.60px;height:1.60px;background:#3a3a3a;border-radius:50%;"></div>
<div style="position:absolute;left:911.50px;top:581.00px;width:1.60px;height:1.60px;background:#3a3a3a;border-radius:50%;"></div>
<div style="position:absolute;left:914.50px;top:581.00px;width:1.60px;height:1.60px;background:#3a3a3a;border-radius:50%;"></div>
<div style="position:absolute;left:928.00px;top:581.50px;width:9.00px;height:0.90px;background:#505050;"></div>
<div style="position:absolute;left:932.10px;top:577.00px;width:0.90px;height:9.00px;background:#505050;"></div>
<div style="position:absolute;left:953.60px;top:577.80px;width:1.60px;height:1.60px;background:#444;border-radius:50%;"></div>
<div style="position:absolute;left:953.60px;top:581.00px;width:1.60px;height:1.60px;background:#444;border-radius:50%;"></div>
<div style="position:absolute;left:953.60px;top:584.20px;width:1.60px;height:1.60px;background:#444;border-radius:50%;"></div>
<div style="position:absolute;left:966.50px;top:576.50px;width:45.00px;height:15.00px;background:#f3f4f6;border-radius:7.5px;"></div>
<svg style="position:absolute;left:968px;top:579px" width="6" height="8" viewBox="0 0 6 8"><path d="M5 0.8 V7.2 L0.8 4 Z" fill="#555"/></svg>
<div style="position:absolute;left:976.80px;top:581.00px;width:20.00px;height:6.20px;background:#7a7a7a;border-radius:3.1px;"></div>
<svg style="position:absolute;left:1004px;top:579px" width="6" height="8" viewBox="0 0 6 8"><path d="M1 0.8 V7.2 L5.2 4 Z" fill="#555"/></svg>
<div style="position:absolute;left:0.00px;top:594.20px;width:1024.00px;height:10.80px;background:#f3f3f3;"></div>
<div class="t" style="left:7.80px;top:598px;font-size:7.8px;line-height:8.71px;color:#505050;transform:scaleX(0.834);transform-origin:left 0;">Ready</div>
<svg style="position:absolute;left:40px;top:597px" width="10" height="8" viewBox="0 0 10 8"><rect x="0.5" y="0.5" width="9" height="8" fill="none" stroke="#555" stroke-width="0.9"/><line x1="0.5" y1="3" x2="9.5" y2="3" stroke="#555" stroke-width="0.8"/><rect x="4" y="4" width="3" height="3" fill="#555"/></svg>
<svg style="position:absolute;left:61px;top:596px" width="10" height="9" viewBox="0 0 10 9"><circle cx="5" cy="2" r="1.6" fill="none" stroke="#444" stroke-width="0.8"/><path d="M1 4 H9 M5 4 V7 M3 9 L5 6.5 L7 9" fill="none" stroke="#444" stroke-width="0.9"/></svg>
<div class="t" style="left:73.40px;top:598px;font-size:7.6px;line-height:8.49px;color:#2a2a2a;font-weight:bold;transform:scaleX(0.888);transform-origin:left 0;">Accessibility: Investigate</div>
<div style="position:absolute;left:826.75px;top:594.20px;width:25.00px;height:10.80px;background:#dcdcdc;"></div>
<svg style="position:absolute;left:834px;top:597px" width="10" height="8" viewBox="0 0 10 8"><path d="M0.5 0.5 H9.5 V8 M0.5 0.5 V8 M0.5 3 H9.5 M0.5 5.7 H9.5 M3.5 0.5 V8 M6.5 0.5 V8" fill="none" stroke="#444" stroke-width="0.8"/></svg>
<svg style="position:absolute;left:861px;top:597px" width="10" height="8" viewBox="0 0 10 8"><rect x="0.5" y="0.5" width="9" height="8" fill="none" stroke="#555" stroke-width="0.8"/><rect x="2.3" y="2.3" width="5.4" height="6" fill="none" stroke="#555" stroke-width="0.8"/><rect x="3.6" y="3.6" width="2.8" height="4" fill="#888"/></svg>
<svg style="position:absolute;left:887px;top:597px" width="10" height="8" viewBox="0 0 10 8"><path d="M0.5 8 V0.5 H9.5 V8 M3.5 0.5 V5.5 H6.5 V0.5" fill="none" stroke="#555" stroke-width="0.8"/></svg>
<div style="position:absolute;left:909.00px;top:601.20px;width:5.00px;height:0.90px;background:#555;"></div>
<div style="position:absolute;left:918.00px;top:601.20px;width:67.00px;height:0.90px;background:#9a9a9a;"></div>
<div style="position:absolute;left:950.50px;top:598.00px;width:2.80px;height:7.00px;background:#555;border-radius:1px;"></div>
<div style="position:absolute;left:987.80px;top:601.20px;width:5.00px;height:0.90px;background:#555;"></div>
<div style="position:absolute;left:989.85px;top:599.20px;width:0.90px;height:5.00px;background:#555;"></div>
<div class="t" style="left:1003.00px;top:599px;font-size:7px;line-height:7.82px;color:#505050;transform:scaleX(0.894);transform-origin:left 0;">100%</div>
</body></html>
